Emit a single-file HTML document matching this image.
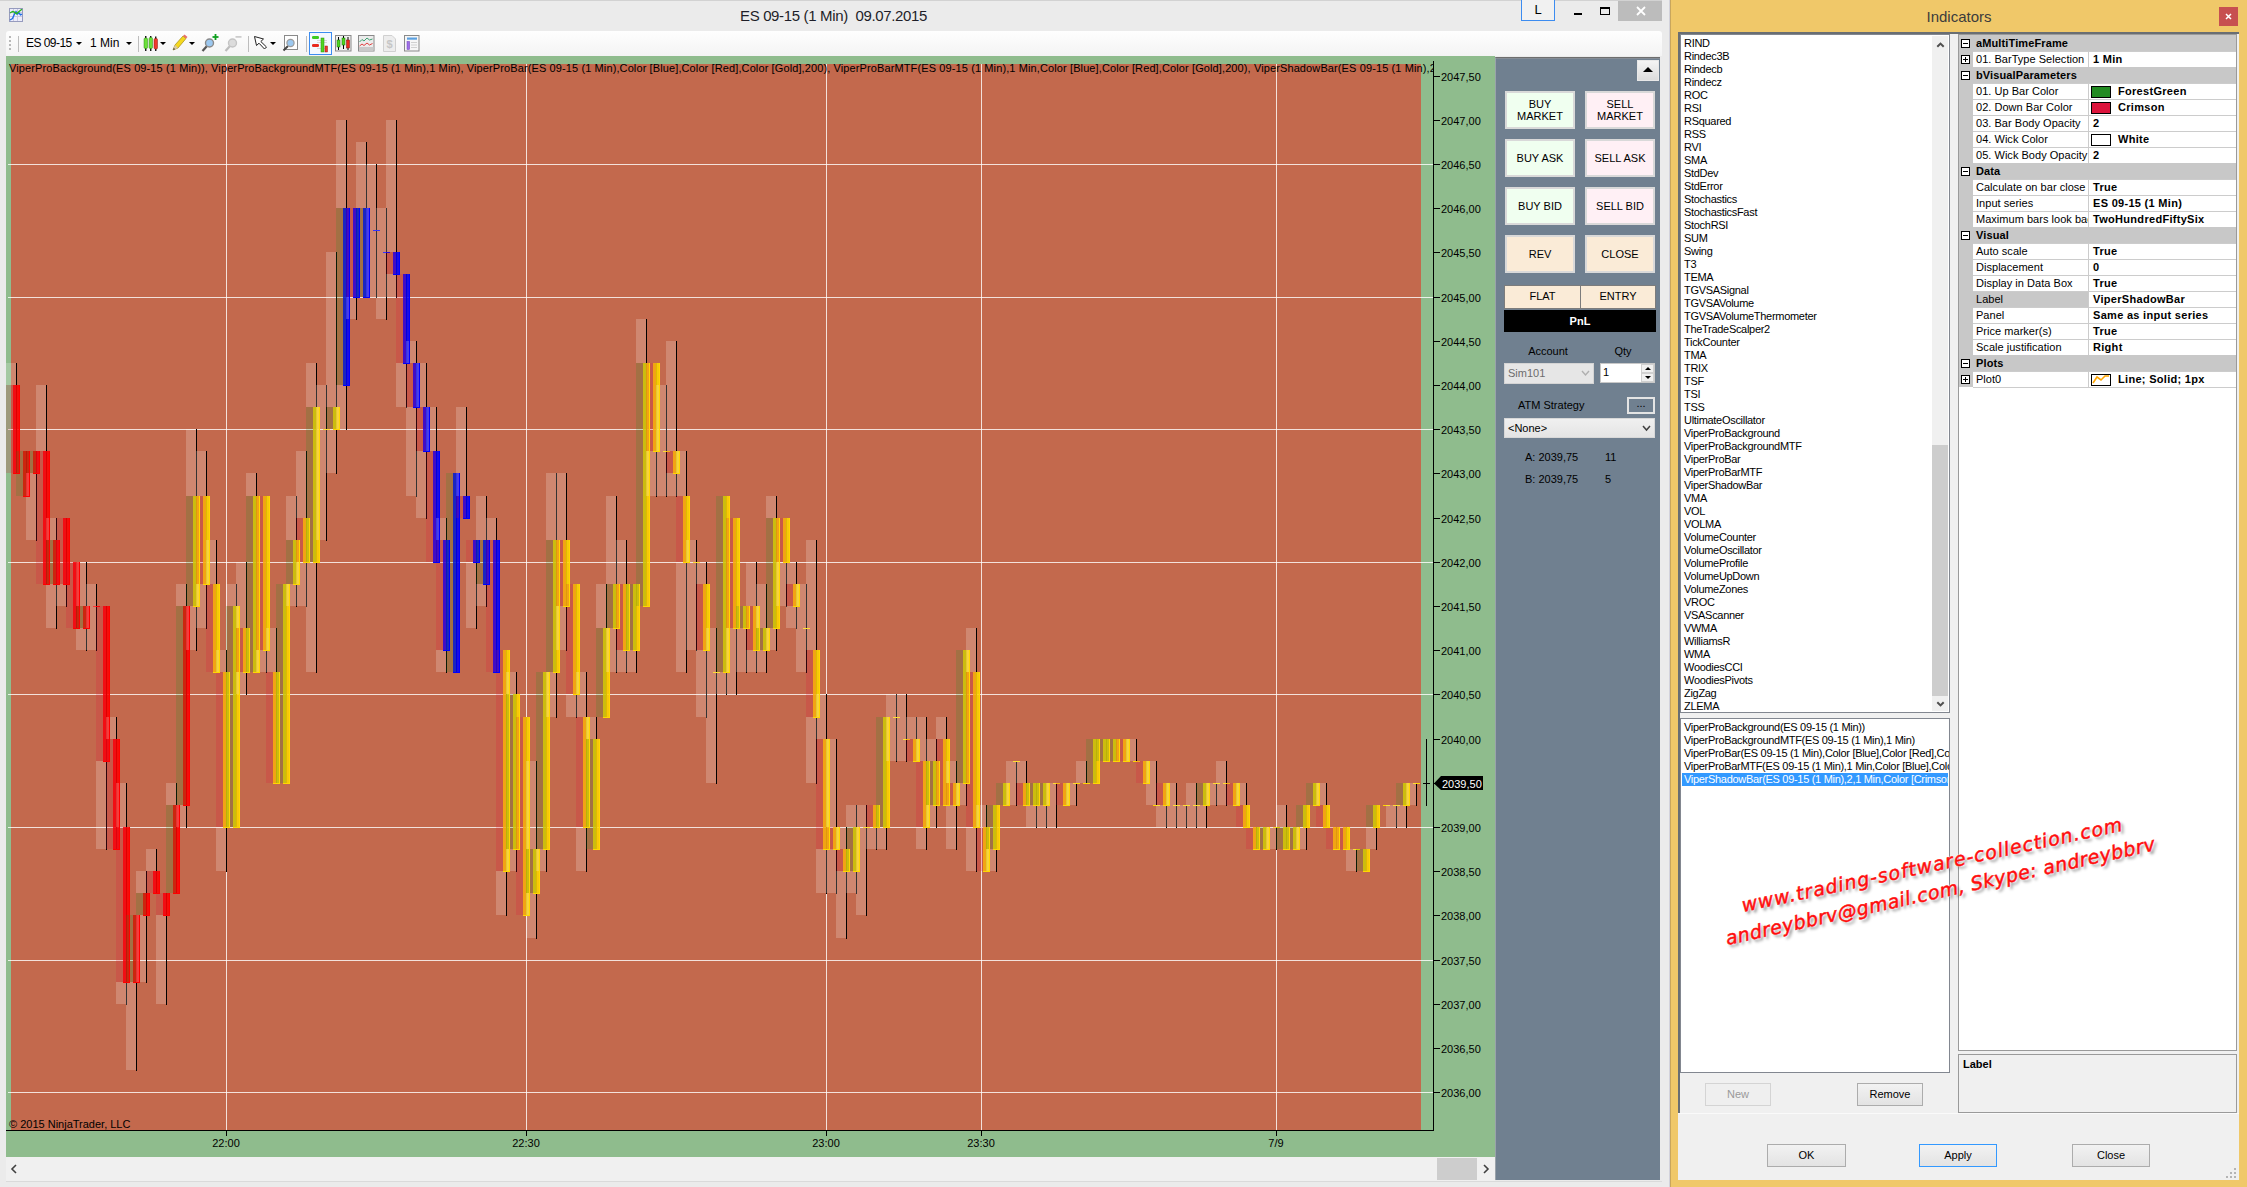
<!DOCTYPE html>
<html><head><meta charset="utf-8"><title>ES 09-15 (1 Min)</title>
<style>
*{box-sizing:border-box;margin:0;padding:0}
html,body{width:2247px;height:1187px;overflow:hidden;background:#EBEBEB}
body{position:relative;font-family:"Liberation Sans",sans-serif;font-size:11px;color:#000}
.a{position:absolute}
.t{position:absolute;white-space:nowrap}
.c{text-align:center}
.tb{position:absolute;left:6px;top:31px;width:1656px;height:25px;background:linear-gradient(#FEFEFE,#F4F4F4);border-radius:3px 3px 0 0}
.sep{position:absolute;top:36px;width:1px;height:16px;background:#BDBDBD}
.dd{position:absolute;width:0;height:0;border-left:3px solid transparent;border-right:3px solid transparent;border-top:3px solid #000}
.bt{position:absolute;width:70px;height:38px;border:2px solid #D9D9D9;font-size:11px;line-height:12px;display:flex;align-items:center;justify-content:center;text-align:center}
.buy{background:#F0FFF0}.sell{background:#FFF0F5}.neu{background:#FAEBD7}
.wl{position:absolute;color:#000;font-size:11px;white-space:nowrap}
.btn{position:absolute;height:23px;border:1px solid #ACACAC;background:linear-gradient(#F2F2F2,#E3E3E3);font-size:11px;line-height:21px;text-align:center}
.lb{position:absolute;background:#fff;border:1px solid #828790;overflow:hidden}
.li{position:absolute;left:3px;height:13px;line-height:13px;white-space:nowrap;font-size:11px;letter-spacing:-0.3px}
.pg{position:absolute;left:1958px;top:34px;width:279px;height:1017px;background:#fff;border:1px solid #9A9A9A;overflow:hidden}
.row{position:absolute;left:0;width:277px;height:16px;line-height:17px;font-size:11px;white-space:nowrap}
.cat{background:#C8C8C8;font-weight:bold}
.gut{position:absolute;left:0;top:0;width:14px;height:16px;background:#C8C8C8}
.lab{position:absolute;left:14px;top:0;width:116px;height:16px;line-height:15px;padding-left:3px;overflow:hidden;border-top:1px solid #CCCCCC;border-right:1px solid #CCCCCC;letter-spacing:0.03px}
.val{position:absolute;left:130px;top:0;width:147px;height:16px;line-height:15px;padding-left:4px;overflow:hidden;border-top:1px solid #CCCCCC;font-weight:bold;letter-spacing:0.3px}
.pm{position:absolute;left:2px;top:4px;width:9px;height:9px;border:1px solid #000;background:#fff}
.pm:before{content:"";position:absolute;left:1px;top:3px;width:5px;height:1px;background:#000}
.pm.plus:after{content:"";position:absolute;left:3px;top:1px;width:1px;height:5px;background:#000}
.sw{position:absolute;left:2px;top:2px;width:20px;height:12px;border:1px solid #000}
.wm{position:absolute;white-space:nowrap;color:#FF0D0D;font-style:italic;font-weight:normal;-webkit-text-stroke:0.5px #FF0D0D;font-family:"DejaVu Sans","Liberation Sans",sans-serif;transform-origin:0 100%;text-shadow:0 0 2px #fff,0 0 2px #fff,2px 3px 3px rgba(0,0,0,.45)}
</style></head><body>
<div class="a" style="left:0;top:0;width:1669px;height:1px;background:#D2D2D2"></div>
<svg class="a" style="left:9px;top:8px" width="14" height="14" viewBox="0 0 14 14"><rect x=".5" y=".5" width="13" height="13" fill="#ECECFA" stroke="#969BBE"/><path d="M4.5 1V13M8.5 1V13M1 4.5H13M1 8.5H13" stroke="#C8C8E1" stroke-width="1" fill="none"/><polyline points="1,12 3.5,10.5 5.5,6 7,3.5 8.5,6 10,5 11.5,6.8 13,6.2" fill="none" stroke="#1E6EE6" stroke-width="1.4"/><polyline points="1,5 3.5,3.5 5.5,4.2 7.5,5.8 10,3.5 13,1.2" fill="none" stroke="#28B41E" stroke-width="1.4"/></svg>
<div class="t" id="wtitle" style="left:740px;top:6px;font-size:15px;line-height:20px;color:#1E1E28;letter-spacing:-0.35px;white-space:pre">ES 09-15 (1 Min)  09.07.2015</div>
<div class="a c" style="left:1521px;top:-1px;width:34px;height:22px;border:1px solid #3C8CF0;background:#F1F1F1;font-size:13px;line-height:20px">L</div>
<div class="a" style="left:1574px;top:13px;width:8px;height:2px;background:#000"></div>
<div class="a" style="left:1600px;top:7px;width:10px;height:8px;border:1px solid #000;border-top-width:2px"></div>
<div class="a" style="left:1618px;top:1px;width:45px;height:20px;background:#BCBCBC"></div>
<svg class="a" style="left:1636px;top:6px" width="10" height="10" viewBox="0 0 10 10"><path d="M1 1L9 9M9 1L1 9" stroke="#fff" stroke-width="1.8"/></svg>
<div class="tb"></div>
<div class="a" style="left:9px;top:36px;width:2px;height:2px;background:#B8B8B8"></div>
<div class="a" style="left:9px;top:40px;width:2px;height:2px;background:#B8B8B8"></div>
<div class="a" style="left:9px;top:44px;width:2px;height:2px;background:#B8B8B8"></div>
<div class="a" style="left:9px;top:48px;width:2px;height:2px;background:#B8B8B8"></div>
<div class="sep" style="left:18px"></div>
<div class="t" style="left:26px;top:35px;font-size:12px;line-height:16px;letter-spacing:-0.55px">ES 09-15</div>
<div class="dd" style="left:76px;top:42px"></div>
<div class="t" style="left:90px;top:35px;font-size:12px;line-height:16px">1 Min</div>
<div class="dd" style="left:126px;top:42px"></div>
<div class="sep" style="left:138px"></div>
<svg class="a" style="left:143px;top:36px" width="16" height="15" viewBox="0 0 16 15"><rect x="2.1" y="0" width="1.3" height="15" fill="#000"/><rect x="7.1" y="0" width="1.3" height="15" fill="#000"/><rect x="12.1" y="0.5" width="1.3" height="14.5" fill="#000"/><rect x="1" y="2" width="3.5" height="10.5" rx="1.2" fill="#6BE03A" stroke="#2A8A10" stroke-width=".5"/><rect x="6" y="1.5" width="3.5" height="11" rx="1.2" fill="#6BE03A" stroke="#2A8A10" stroke-width=".5"/><rect x="11" y="2.5" width="3.5" height="10.5" rx="1.2" fill="#F03A2E" stroke="#8A1A10" stroke-width=".5"/></svg>
<div class="dd" style="left:160px;top:42px"></div>
<svg class="a" style="left:172px;top:34px" width="16" height="18" viewBox="0 0 16 18"><polygon points="1,16 3,11 11,2 14,4.5 6,14" fill="#F5D81E" stroke="#A08A10" stroke-width=".7"/><polygon points="11,2 12.5,0.6 15.5,3 14,4.5" fill="#E8706A"/><polygon points="1,16 3,11 6,14" fill="#D8C8A8"/><polygon points="1,16 1.8,13.8 3.2,15.2" fill="#444"/></svg>
<div class="dd" style="left:189px;top:42px"></div>
<svg class="a" style="left:201px;top:33px" width="18" height="20" viewBox="0 0 18 20"><line x1="1.5" y1="18" x2="6" y2="13" stroke="#555" stroke-width="2.2"/><circle cx="8.5" cy="10" r="4" fill="#9CC8F0" stroke="#8A8A8A" stroke-width="1.4"/><rect x="13.6" y="1" width="1.8" height="6" fill="#10A020"/><rect x="11.5" y="3.1" width="6" height="1.8" fill="#10A020"/></svg>
<svg class="a" style="left:224px;top:33px" width="18" height="20" viewBox="0 0 18 20"><line x1="1.5" y1="18" x2="6" y2="13" stroke="#BDBDBD" stroke-width="2.2"/><circle cx="8.5" cy="10" r="4" fill="#DCDCDC" stroke="#C4C4C4" stroke-width="1.4"/><rect x="11.5" y="3.1" width="6" height="1.6" fill="#C8C8C8"/></svg>
<div class="sep" style="left:248px"></div>
<svg class="a" style="left:253px;top:35px" width="16" height="16" viewBox="0 0 16 16"><polygon points="1.5,1.5 3.5,10.5 6,8.2 11.5,14 13.5,12 7.8,6.5 10.5,4" fill="#fff" stroke="#222" stroke-width="1"/></svg>
<div class="dd" style="left:270px;top:42px"></div>
<svg class="a" style="left:282px;top:34px" width="18" height="18" viewBox="0 0 18 18"><rect x="2.5" y="1.5" width="13" height="14" fill="#fff" stroke="#8A8A8A"/><line x1="1.5" y1="16.5" x2="6" y2="12" stroke="#444" stroke-width="2"/><circle cx="8.5" cy="9" r="3.6" fill="#9CC8F0" stroke="#9A9A9A" stroke-width="1.2"/></svg>
<div class="sep" style="left:306px"></div>
<div class="a" style="left:309px;top:32px;width:23px;height:23px;border:1px solid #3C8CF0;background:#F4F8FE"></div>
<svg class="a" style="left:311px;top:34px" width="19" height="19" viewBox="0 0 19 19"><rect x="1" y="2" width="7" height="3" rx="1.3" fill="#3CCB20"/><rect x="1" y="10" width="7" height="3" rx="1.3" fill="#E8281E"/><rect x="6" y="6" width="10" height="1" fill="#D8D8D8"/><rect x="6" y="8" width="10" height="1" fill="#D8D8D8"/><rect x="6" y="14" width="10" height="1" fill="#D8D8D8"/><rect x="10" y="4" width="3" height="14" fill="#4FD620" stroke="#2A8A10" stroke-width=".5"/><rect x="14" y="12" width="2.5" height="6" fill="#EE3A2E" stroke="#9A1A10" stroke-width=".5"/></svg>
<svg class="a" style="left:335px;top:35px" width="17" height="17" viewBox="0 0 17 17"><rect x=".5" y=".5" width="15.5" height="15.5" fill="#F0F0F0" stroke="#8A8A8A"/><rect x="3" y="2" width="1" height="13" fill="#000"/><rect x="8" y="1" width="1" height="13" fill="#000"/><rect x="12.5" y="2" width="1" height="13" fill="#000"/><rect x="2" y="5" width="3" height="7" fill="#4FD620" stroke="#1A6A08" stroke-width=".5"/><rect x="7" y="3" width="3" height="7" fill="#4FD620" stroke="#1A6A08" stroke-width=".5"/><rect x="11.5" y="5" width="3" height="8" fill="#EE2A1E" stroke="#7A1008" stroke-width=".5"/></svg>
<svg class="a" style="left:358px;top:35px" width="17" height="17" viewBox="0 0 17 17"><rect x=".5" y=".5" width="15.5" height="15.5" fill="#ECECEC" stroke="#8A8A8A"/><rect x="1" y="12" width="14.5" height="4" fill="#C9C9C9"/><polyline points="1.5,7 4,4.5 6,6 9,3 11.5,5 14.5,4" fill="none" stroke="#3CA070" stroke-width="1"/><polyline points="1.5,11 4,9 6,10.5 9,8 11.5,10 14.5,8.5" fill="none" stroke="#E04040" stroke-width="1"/></svg>
<svg class="a" style="left:383px;top:35px" width="13" height="17" viewBox="0 0 13 17"><polygon points=".5,.5 9,.5 12.5,4 12.5,16.5 .5,16.5" fill="#EDEDED" stroke="#D0D0D0"/><text x="6.5" y="13" font-size="11" font-weight="bold" text-anchor="middle" fill="#C6C6C6" font-family="'Liberation Sans',sans-serif">$</text></svg>
<svg class="a" style="left:404px;top:35px" width="16" height="17" viewBox="0 0 16 17"><rect x=".5" y=".5" width="14.5" height="15.5" fill="#F6F6F6" stroke="#8A8A8A"/><rect x="3" y="2.5" width="10" height="2.2" fill="#5AA0E0"/><rect x="3" y="6.5" width="2.6" height="8" fill="#A070E8" stroke="#7040C0" stroke-width=".5"/><rect x="7" y="7" width="6" height="1" fill="#D0D0D0"/><rect x="7" y="9.5" width="6" height="1" fill="#D0D0D0"/><rect x="7" y="12" width="6" height="1" fill="#D0D0D0"/></svg>
<svg id="chart" width="1489" height="1101" viewBox="6 56 1489 1101" shape-rendering="crispEdges" style="position:absolute;left:6px;top:56px">
<rect x="6" y="56" width="1489" height="1101" fill="#8FBC8D"/>
<rect x="11" y="64" width="1410" height="1066" fill="#C3694D"/>
<g fill="#fff" fill-opacity="0.8">
<rect x="226" y="64" width="1" height="1066"/>
<rect x="526" y="64" width="1" height="1066"/>
<rect x="826" y="64" width="1" height="1066"/>
<rect x="981" y="64" width="1" height="1066"/>
<rect x="1276" y="64" width="1" height="1066"/>
<rect x="8" y="164" width="1425" height="1"/>
<rect x="8" y="297" width="1425" height="1"/>
<rect x="8" y="429" width="1425" height="1"/>
<rect x="8" y="562" width="1425" height="1"/>
<rect x="8" y="694" width="1425" height="1"/>
<rect x="8" y="827" width="1425" height="1"/>
<rect x="8" y="960" width="1425" height="1"/>
<rect x="8" y="1092" width="1425" height="1"/>
</g>
<g>
<rect x="16" y="363" width="1" height="111" fill="#000"/>
<rect x="13" y="385" width="7" height="89" fill="#FF0000" fill-opacity="0.87"/>
<rect x="26" y="451" width="1" height="46" fill="#000"/>
<rect x="23" y="451" width="7" height="46" fill="#FF0000" fill-opacity="0.87"/>
<rect x="36" y="451" width="1" height="90" fill="#000"/>
<rect x="33" y="451" width="7" height="23" fill="#FF0000" fill-opacity="0.87"/>
<rect x="46" y="385" width="1" height="200" fill="#000"/>
<rect x="43" y="451" width="7" height="134" fill="#FF0000" fill-opacity="0.87"/>
<rect x="56" y="518" width="1" height="111" fill="#000"/>
<rect x="53" y="540" width="7" height="45" fill="#FF0000" fill-opacity="0.87"/>
<rect x="66" y="518" width="1" height="89" fill="#000"/>
<rect x="63" y="518" width="7" height="67" fill="#FF0000" fill-opacity="0.87"/>
<rect x="76" y="562" width="1" height="67" fill="#000"/>
<rect x="73" y="562" width="7" height="67" fill="#FF0000" fill-opacity="0.87"/>
<rect x="86" y="562" width="1" height="89" fill="#000"/>
<rect x="83" y="606" width="7" height="23" fill="#FF0000" fill-opacity="0.87"/>
<rect x="96" y="584" width="1" height="67" fill="#000"/>
<rect x="93" y="606" width="7" height="1" fill="#FF0000"/>
<rect x="106" y="606" width="1" height="244" fill="#000"/>
<rect x="103" y="606" width="7" height="156" fill="#FF0000" fill-opacity="0.87"/>
<rect x="116" y="717" width="1" height="133" fill="#000"/>
<rect x="113" y="739" width="7" height="111" fill="#FF0000" fill-opacity="0.87"/>
<rect x="126" y="783" width="1" height="222" fill="#000"/>
<rect x="123" y="827" width="7" height="156" fill="#FF0000" fill-opacity="0.87"/>
<rect x="136" y="915" width="1" height="156" fill="#000"/>
<rect x="133" y="915" width="7" height="68" fill="#FF0000" fill-opacity="0.87"/>
<rect x="146" y="871" width="1" height="112" fill="#000"/>
<rect x="143" y="893" width="7" height="23" fill="#FF0000" fill-opacity="0.87"/>
<rect x="156" y="849" width="1" height="45" fill="#000"/>
<rect x="153" y="871" width="7" height="23" fill="#FF0000" fill-opacity="0.87"/>
<rect x="166" y="893" width="1" height="112" fill="#000"/>
<rect x="163" y="893" width="7" height="23" fill="#FF0000" fill-opacity="0.87"/>
<rect x="176" y="783" width="1" height="111" fill="#000"/>
<rect x="173" y="805" width="7" height="89" fill="#FF0000" fill-opacity="0.87"/>
<rect x="186" y="584" width="1" height="244" fill="#000"/>
<rect x="183" y="606" width="7" height="200" fill="#FF0000" fill-opacity="0.87"/>
<rect x="196" y="429" width="1" height="222" fill="#000"/>
<rect x="193" y="496" width="7" height="111" fill="#FFD700" fill-opacity="0.87"/>
<rect x="206" y="451" width="1" height="178" fill="#000"/>
<rect x="203" y="496" width="7" height="89" fill="#FFD700" fill-opacity="0.87"/>
<rect x="216" y="540" width="1" height="133" fill="#000"/>
<rect x="213" y="584" width="7" height="89" fill="#FFD700" fill-opacity="0.87"/>
<rect x="226" y="650" width="1" height="222" fill="#000"/>
<rect x="223" y="672" width="7" height="156" fill="#FFD700" fill-opacity="0.87"/>
<rect x="236" y="584" width="1" height="244" fill="#000"/>
<rect x="233" y="606" width="7" height="222" fill="#FFD700" fill-opacity="0.87"/>
<rect x="246" y="562" width="1" height="133" fill="#000"/>
<rect x="243" y="628" width="7" height="45" fill="#FFD700" fill-opacity="0.87"/>
<rect x="256" y="473" width="1" height="200" fill="#000"/>
<rect x="253" y="496" width="7" height="177" fill="#FFD700" fill-opacity="0.87"/>
<rect x="266" y="496" width="1" height="177" fill="#000"/>
<rect x="263" y="496" width="7" height="155" fill="#FFD700" fill-opacity="0.87"/>
<rect x="276" y="628" width="1" height="156" fill="#000"/>
<rect x="273" y="672" width="7" height="112" fill="#FFD700" fill-opacity="0.87"/>
<rect x="286" y="584" width="1" height="200" fill="#000"/>
<rect x="283" y="584" width="7" height="200" fill="#FFD700" fill-opacity="0.87"/>
<rect x="296" y="496" width="1" height="111" fill="#000"/>
<rect x="293" y="540" width="7" height="45" fill="#FFD700" fill-opacity="0.87"/>
<rect x="306" y="451" width="1" height="156" fill="#000"/>
<rect x="303" y="518" width="7" height="45" fill="#FFD700" fill-opacity="0.87"/>
<rect x="316" y="363" width="1" height="310" fill="#000"/>
<rect x="313" y="407" width="7" height="156" fill="#FFD700" fill-opacity="0.87"/>
<rect x="326" y="385" width="1" height="156" fill="#000"/>
<rect x="323" y="429" width="7" height="1" fill="#FFD700"/>
<rect x="336" y="252" width="1" height="222" fill="#000"/>
<rect x="333" y="407" width="7" height="23" fill="#FFD700" fill-opacity="0.87"/>
<rect x="346" y="120" width="1" height="310" fill="#000"/>
<rect x="343" y="208" width="7" height="178" fill="#0000FF" fill-opacity="0.87"/>
<rect x="356" y="208" width="1" height="112" fill="#000"/>
<rect x="353" y="208" width="7" height="90" fill="#0000FF" fill-opacity="0.87"/>
<rect x="366" y="142" width="1" height="156" fill="#000"/>
<rect x="363" y="208" width="7" height="90" fill="#0000FF" fill-opacity="0.87"/>
<rect x="376" y="164" width="1" height="134" fill="#000"/>
<rect x="373" y="230" width="7" height="1" fill="#0000FF"/>
<rect x="386" y="208" width="1" height="112" fill="#000"/>
<rect x="383" y="252" width="7" height="1" fill="#0000FF"/>
<rect x="396" y="120" width="1" height="178" fill="#000"/>
<rect x="393" y="252" width="7" height="23" fill="#0000FF" fill-opacity="0.87"/>
<rect x="406" y="274" width="1" height="134" fill="#000"/>
<rect x="403" y="274" width="7" height="90" fill="#0000FF" fill-opacity="0.87"/>
<rect x="416" y="341" width="1" height="156" fill="#000"/>
<rect x="413" y="363" width="7" height="45" fill="#0000FF" fill-opacity="0.87"/>
<rect x="426" y="363" width="1" height="156" fill="#000"/>
<rect x="423" y="407" width="7" height="45" fill="#0000FF" fill-opacity="0.87"/>
<rect x="436" y="407" width="1" height="156" fill="#000"/>
<rect x="433" y="451" width="7" height="112" fill="#0000FF" fill-opacity="0.87"/>
<rect x="446" y="518" width="1" height="155" fill="#000"/>
<rect x="443" y="540" width="7" height="111" fill="#0000FF" fill-opacity="0.87"/>
<rect x="456" y="473" width="1" height="200" fill="#000"/>
<rect x="453" y="473" width="7" height="200" fill="#0000FF" fill-opacity="0.87"/>
<rect x="466" y="407" width="1" height="112" fill="#000"/>
<rect x="463" y="496" width="7" height="23" fill="#0000FF" fill-opacity="0.87"/>
<rect x="476" y="540" width="1" height="89" fill="#000"/>
<rect x="473" y="540" width="7" height="23" fill="#0000FF" fill-opacity="0.87"/>
<rect x="486" y="496" width="1" height="111" fill="#000"/>
<rect x="483" y="540" width="7" height="45" fill="#0000FF" fill-opacity="0.87"/>
<rect x="496" y="518" width="1" height="155" fill="#000"/>
<rect x="493" y="540" width="7" height="133" fill="#0000FF" fill-opacity="0.87"/>
<rect x="506" y="650" width="1" height="266" fill="#000"/>
<rect x="503" y="650" width="7" height="222" fill="#FFD700" fill-opacity="0.87"/>
<rect x="516" y="672" width="1" height="200" fill="#000"/>
<rect x="513" y="694" width="7" height="156" fill="#FFD700" fill-opacity="0.87"/>
<rect x="526" y="717" width="1" height="199" fill="#000"/>
<rect x="523" y="717" width="7" height="199" fill="#FFD700" fill-opacity="0.87"/>
<rect x="536" y="761" width="1" height="178" fill="#000"/>
<rect x="533" y="849" width="7" height="45" fill="#FFD700" fill-opacity="0.87"/>
<rect x="546" y="672" width="1" height="200" fill="#000"/>
<rect x="543" y="672" width="7" height="178" fill="#FFD700" fill-opacity="0.87"/>
<rect x="556" y="473" width="1" height="245" fill="#000"/>
<rect x="553" y="540" width="7" height="133" fill="#FFD700" fill-opacity="0.87"/>
<rect x="566" y="473" width="1" height="178" fill="#000"/>
<rect x="563" y="540" width="7" height="67" fill="#FFD700" fill-opacity="0.87"/>
<rect x="576" y="584" width="1" height="134" fill="#000"/>
<rect x="573" y="584" width="7" height="111" fill="#FFD700" fill-opacity="0.87"/>
<rect x="586" y="672" width="1" height="200" fill="#000"/>
<rect x="583" y="717" width="7" height="111" fill="#FFD700" fill-opacity="0.87"/>
<rect x="596" y="717" width="1" height="133" fill="#000"/>
<rect x="593" y="739" width="7" height="111" fill="#FFD700" fill-opacity="0.87"/>
<rect x="606" y="584" width="1" height="134" fill="#000"/>
<rect x="603" y="628" width="7" height="90" fill="#FFD700" fill-opacity="0.87"/>
<rect x="616" y="496" width="1" height="177" fill="#000"/>
<rect x="613" y="584" width="7" height="45" fill="#FFD700" fill-opacity="0.87"/>
<rect x="626" y="540" width="1" height="133" fill="#000"/>
<rect x="623" y="584" width="7" height="67" fill="#FFD700" fill-opacity="0.87"/>
<rect x="636" y="584" width="1" height="89" fill="#000"/>
<rect x="633" y="584" width="7" height="67" fill="#FFD700" fill-opacity="0.87"/>
<rect x="646" y="319" width="1" height="288" fill="#000"/>
<rect x="643" y="363" width="7" height="244" fill="#FFD700" fill-opacity="0.87"/>
<rect x="656" y="363" width="1" height="134" fill="#000"/>
<rect x="653" y="363" width="7" height="89" fill="#FFD700" fill-opacity="0.87"/>
<rect x="666" y="385" width="1" height="112" fill="#000"/>
<rect x="663" y="451" width="7" height="1" fill="#FFD700"/>
<rect x="676" y="341" width="1" height="156" fill="#000"/>
<rect x="673" y="451" width="7" height="23" fill="#FFD700" fill-opacity="0.87"/>
<rect x="686" y="451" width="1" height="222" fill="#000"/>
<rect x="683" y="496" width="7" height="67" fill="#FFD700" fill-opacity="0.87"/>
<rect x="696" y="540" width="1" height="111" fill="#000"/>
<rect x="693" y="562" width="7" height="1" fill="#FFD700"/>
<rect x="706" y="562" width="1" height="156" fill="#000"/>
<rect x="703" y="584" width="7" height="67" fill="#FFD700" fill-opacity="0.87"/>
<rect x="716" y="628" width="1" height="156" fill="#000"/>
<rect x="713" y="672" width="7" height="1" fill="#FFD700"/>
<rect x="726" y="496" width="1" height="199" fill="#000"/>
<rect x="723" y="496" width="7" height="177" fill="#FFD700" fill-opacity="0.87"/>
<rect x="736" y="518" width="1" height="177" fill="#000"/>
<rect x="733" y="518" width="7" height="111" fill="#FFD700" fill-opacity="0.87"/>
<rect x="746" y="606" width="1" height="67" fill="#000"/>
<rect x="743" y="606" width="7" height="23" fill="#FFD700" fill-opacity="0.87"/>
<rect x="756" y="562" width="1" height="111" fill="#000"/>
<rect x="753" y="606" width="7" height="45" fill="#FFD700" fill-opacity="0.87"/>
<rect x="766" y="584" width="1" height="89" fill="#000"/>
<rect x="763" y="628" width="7" height="23" fill="#FFD700" fill-opacity="0.87"/>
<rect x="776" y="496" width="1" height="155" fill="#000"/>
<rect x="773" y="518" width="7" height="111" fill="#FFD700" fill-opacity="0.87"/>
<rect x="786" y="518" width="1" height="89" fill="#000"/>
<rect x="783" y="518" width="7" height="45" fill="#FFD700" fill-opacity="0.87"/>
<rect x="796" y="562" width="1" height="67" fill="#000"/>
<rect x="793" y="584" width="7" height="23" fill="#FFD700" fill-opacity="0.87"/>
<rect x="806" y="584" width="1" height="89" fill="#000"/>
<rect x="803" y="628" width="7" height="1" fill="#FFD700"/>
<rect x="816" y="540" width="1" height="244" fill="#000"/>
<rect x="813" y="650" width="7" height="68" fill="#FFD700" fill-opacity="0.87"/>
<rect x="826" y="694" width="1" height="200" fill="#000"/>
<rect x="823" y="739" width="7" height="111" fill="#FFD700" fill-opacity="0.87"/>
<rect x="836" y="739" width="1" height="155" fill="#000"/>
<rect x="833" y="827" width="7" height="23" fill="#FFD700" fill-opacity="0.87"/>
<rect x="846" y="827" width="1" height="112" fill="#000"/>
<rect x="843" y="849" width="7" height="23" fill="#FFD700" fill-opacity="0.87"/>
<rect x="856" y="805" width="1" height="89" fill="#000"/>
<rect x="853" y="827" width="7" height="45" fill="#FFD700" fill-opacity="0.87"/>
<rect x="866" y="805" width="1" height="111" fill="#000"/>
<rect x="863" y="827" width="7" height="1" fill="#FFD700"/>
<rect x="876" y="805" width="1" height="45" fill="#000"/>
<rect x="873" y="805" width="7" height="23" fill="#FFD700" fill-opacity="0.87"/>
<rect x="886" y="717" width="1" height="133" fill="#000"/>
<rect x="883" y="717" width="7" height="111" fill="#FFD700" fill-opacity="0.87"/>
<rect x="896" y="694" width="1" height="68" fill="#000"/>
<rect x="893" y="717" width="7" height="1" fill="#FFD700"/>
<rect x="906" y="694" width="1" height="68" fill="#000"/>
<rect x="903" y="739" width="7" height="1" fill="#FFD700"/>
<rect x="916" y="717" width="1" height="45" fill="#000"/>
<rect x="913" y="739" width="7" height="23" fill="#FFD700" fill-opacity="0.87"/>
<rect x="926" y="717" width="1" height="133" fill="#000"/>
<rect x="923" y="761" width="7" height="67" fill="#FFD700" fill-opacity="0.87"/>
<rect x="936" y="739" width="1" height="89" fill="#000"/>
<rect x="933" y="761" width="7" height="45" fill="#FFD700" fill-opacity="0.87"/>
<rect x="946" y="717" width="1" height="89" fill="#000"/>
<rect x="943" y="739" width="7" height="67" fill="#FFD700" fill-opacity="0.87"/>
<rect x="956" y="761" width="1" height="89" fill="#000"/>
<rect x="953" y="783" width="7" height="23" fill="#FFD700" fill-opacity="0.87"/>
<rect x="966" y="650" width="1" height="156" fill="#000"/>
<rect x="963" y="650" width="7" height="134" fill="#FFD700" fill-opacity="0.87"/>
<rect x="976" y="628" width="1" height="244" fill="#000"/>
<rect x="973" y="672" width="7" height="156" fill="#FFD700" fill-opacity="0.87"/>
<rect x="986" y="805" width="1" height="67" fill="#000"/>
<rect x="983" y="827" width="7" height="45" fill="#FFD700" fill-opacity="0.87"/>
<rect x="996" y="805" width="1" height="67" fill="#000"/>
<rect x="993" y="805" width="7" height="45" fill="#FFD700" fill-opacity="0.87"/>
<rect x="1006" y="783" width="1" height="23" fill="#000"/>
<rect x="1003" y="783" width="7" height="23" fill="#FFD700" fill-opacity="0.87"/>
<rect x="1016" y="761" width="1" height="45" fill="#000"/>
<rect x="1013" y="761" width="7" height="1" fill="#FFD700"/>
<rect x="1026" y="761" width="1" height="45" fill="#000"/>
<rect x="1023" y="783" width="7" height="23" fill="#FFD700" fill-opacity="0.87"/>
<rect x="1036" y="783" width="1" height="45" fill="#000"/>
<rect x="1033" y="783" width="7" height="23" fill="#FFD700" fill-opacity="0.87"/>
<rect x="1046" y="783" width="1" height="45" fill="#000"/>
<rect x="1043" y="783" width="7" height="23" fill="#FFD700" fill-opacity="0.87"/>
<rect x="1056" y="783" width="1" height="45" fill="#000"/>
<rect x="1053" y="783" width="7" height="1" fill="#FFD700"/>
<rect x="1066" y="783" width="1" height="23" fill="#000"/>
<rect x="1063" y="783" width="7" height="23" fill="#FFD700" fill-opacity="0.87"/>
<rect x="1076" y="783" width="1" height="23" fill="#000"/>
<rect x="1073" y="783" width="7" height="1" fill="#FFD700"/>
<rect x="1086" y="761" width="1" height="23" fill="#000"/>
<rect x="1083" y="783" width="7" height="1" fill="#FFD700"/>
<rect x="1096" y="739" width="1" height="45" fill="#000"/>
<rect x="1093" y="739" width="7" height="45" fill="#FFD700" fill-opacity="0.87"/>
<rect x="1106" y="739" width="1" height="23" fill="#000"/>
<rect x="1103" y="739" width="7" height="23" fill="#FFD700" fill-opacity="0.87"/>
<rect x="1116" y="739" width="1" height="23" fill="#000"/>
<rect x="1113" y="739" width="7" height="23" fill="#FFD700" fill-opacity="0.87"/>
<rect x="1126" y="739" width="1" height="23" fill="#000"/>
<rect x="1123" y="739" width="7" height="23" fill="#FFD700" fill-opacity="0.87"/>
<rect x="1136" y="739" width="1" height="23" fill="#000"/>
<rect x="1133" y="761" width="7" height="1" fill="#FFD700"/>
<rect x="1146" y="761" width="1" height="23" fill="#000"/>
<rect x="1143" y="761" width="7" height="23" fill="#FFD700" fill-opacity="0.87"/>
<rect x="1156" y="761" width="1" height="45" fill="#000"/>
<rect x="1153" y="805" width="7" height="1" fill="#FFD700"/>
<rect x="1166" y="783" width="1" height="45" fill="#000"/>
<rect x="1163" y="783" width="7" height="23" fill="#FFD700" fill-opacity="0.87"/>
<rect x="1176" y="783" width="1" height="45" fill="#000"/>
<rect x="1173" y="805" width="7" height="1" fill="#FFD700"/>
<rect x="1186" y="805" width="1" height="23" fill="#000"/>
<rect x="1183" y="805" width="7" height="1" fill="#FFD700"/>
<rect x="1196" y="783" width="1" height="45" fill="#000"/>
<rect x="1193" y="805" width="7" height="1" fill="#FFD700"/>
<rect x="1206" y="783" width="1" height="45" fill="#000"/>
<rect x="1203" y="783" width="7" height="23" fill="#FFD700" fill-opacity="0.87"/>
<rect x="1216" y="783" width="1" height="23" fill="#000"/>
<rect x="1213" y="783" width="7" height="1" fill="#FFD700"/>
<rect x="1226" y="761" width="1" height="45" fill="#000"/>
<rect x="1223" y="783" width="7" height="1" fill="#FFD700"/>
<rect x="1236" y="783" width="1" height="23" fill="#000"/>
<rect x="1233" y="783" width="7" height="23" fill="#FFD700" fill-opacity="0.87"/>
<rect x="1246" y="783" width="1" height="45" fill="#000"/>
<rect x="1243" y="805" width="7" height="23" fill="#FFD700" fill-opacity="0.87"/>
<rect x="1256" y="827" width="1" height="23" fill="#000"/>
<rect x="1253" y="827" width="7" height="23" fill="#FFD700" fill-opacity="0.87"/>
<rect x="1266" y="827" width="1" height="23" fill="#000"/>
<rect x="1263" y="827" width="7" height="23" fill="#FFD700" fill-opacity="0.87"/>
<rect x="1276" y="827" width="1" height="23" fill="#000"/>
<rect x="1273" y="827" width="7" height="1" fill="#FFD700"/>
<rect x="1286" y="805" width="1" height="45" fill="#000"/>
<rect x="1283" y="827" width="7" height="23" fill="#FFD700" fill-opacity="0.87"/>
<rect x="1296" y="827" width="1" height="23" fill="#000"/>
<rect x="1293" y="827" width="7" height="23" fill="#FFD700" fill-opacity="0.87"/>
<rect x="1306" y="805" width="1" height="45" fill="#000"/>
<rect x="1303" y="805" width="7" height="23" fill="#FFD700" fill-opacity="0.87"/>
<rect x="1316" y="783" width="1" height="23" fill="#000"/>
<rect x="1313" y="783" width="7" height="23" fill="#FFD700" fill-opacity="0.87"/>
<rect x="1326" y="783" width="1" height="45" fill="#000"/>
<rect x="1323" y="805" width="7" height="23" fill="#FFD700" fill-opacity="0.87"/>
<rect x="1336" y="827" width="1" height="23" fill="#000"/>
<rect x="1333" y="827" width="7" height="23" fill="#FFD700" fill-opacity="0.87"/>
<rect x="1346" y="827" width="1" height="23" fill="#000"/>
<rect x="1343" y="827" width="7" height="23" fill="#FFD700" fill-opacity="0.87"/>
<rect x="1356" y="849" width="1" height="23" fill="#000"/>
<rect x="1353" y="849" width="7" height="1" fill="#FFD700"/>
<rect x="1366" y="849" width="1" height="23" fill="#000"/>
<rect x="1363" y="849" width="7" height="23" fill="#FFD700" fill-opacity="0.87"/>
<rect x="1376" y="805" width="1" height="45" fill="#000"/>
<rect x="1373" y="805" width="7" height="23" fill="#FFD700" fill-opacity="0.87"/>
<rect x="1386" y="805" width="1" height="1" fill="#000"/>
<rect x="1383" y="805" width="7" height="1" fill="#FFD700"/>
<rect x="1396" y="805" width="1" height="23" fill="#000"/>
<rect x="1393" y="805" width="7" height="1" fill="#FFD700"/>
<rect x="1406" y="783" width="1" height="45" fill="#000"/>
<rect x="1403" y="783" width="7" height="23" fill="#FFD700" fill-opacity="0.87"/>
<rect x="1416" y="783" width="1" height="23" fill="#000"/>
<rect x="1413" y="783" width="7" height="1" fill="#FFD700"/>
</g>
<g>
<rect x="6" y="363" width="10" height="22" fill="#fff" fill-opacity="0.2"/>
<rect x="6" y="385" width="10" height="88" fill="#DC143C" fill-opacity="0.2"/>
<rect x="16" y="451" width="10" height="45" fill="#228B22" fill-opacity="0.2"/>
<rect x="26" y="451" width="10" height="22" fill="#228B22" fill-opacity="0.2"/>
<rect x="26" y="473" width="10" height="67" fill="#fff" fill-opacity="0.2"/>
<rect x="36" y="385" width="10" height="66" fill="#fff" fill-opacity="0.2"/>
<rect x="36" y="451" width="10" height="133" fill="#DC143C" fill-opacity="0.2"/>
<rect x="46" y="518" width="10" height="22" fill="#fff" fill-opacity="0.2"/>
<rect x="46" y="540" width="10" height="44" fill="#228B22" fill-opacity="0.2"/>
<rect x="46" y="584" width="10" height="44" fill="#fff" fill-opacity="0.2"/>
<rect x="56" y="518" width="10" height="66" fill="#DC143C" fill-opacity="0.2"/>
<rect x="56" y="584" width="10" height="22" fill="#fff" fill-opacity="0.2"/>
<rect x="66" y="562" width="10" height="66" fill="#DC143C" fill-opacity="0.2"/>
<rect x="76" y="562" width="10" height="44" fill="#fff" fill-opacity="0.2"/>
<rect x="76" y="606" width="10" height="22" fill="#228B22" fill-opacity="0.2"/>
<rect x="76" y="628" width="10" height="22" fill="#fff" fill-opacity="0.2"/>
<rect x="86" y="584" width="10" height="22" fill="#fff" fill-opacity="0.2"/>
<rect x="86" y="606" width="10" height="44" fill="#fff" fill-opacity="0.2"/>
<rect x="96" y="606" width="10" height="155" fill="#DC143C" fill-opacity="0.2"/>
<rect x="96" y="761" width="10" height="88" fill="#fff" fill-opacity="0.2"/>
<rect x="106" y="717" width="10" height="22" fill="#fff" fill-opacity="0.2"/>
<rect x="106" y="739" width="10" height="110" fill="#DC143C" fill-opacity="0.2"/>
<rect x="116" y="783" width="10" height="44" fill="#fff" fill-opacity="0.2"/>
<rect x="116" y="827" width="10" height="155" fill="#DC143C" fill-opacity="0.2"/>
<rect x="116" y="982" width="10" height="22" fill="#fff" fill-opacity="0.2"/>
<rect x="126" y="915" width="10" height="67" fill="#228B22" fill-opacity="0.2"/>
<rect x="126" y="982" width="10" height="88" fill="#fff" fill-opacity="0.2"/>
<rect x="136" y="871" width="10" height="22" fill="#fff" fill-opacity="0.2"/>
<rect x="136" y="893" width="10" height="22" fill="#228B22" fill-opacity="0.2"/>
<rect x="136" y="915" width="10" height="67" fill="#fff" fill-opacity="0.2"/>
<rect x="146" y="849" width="10" height="22" fill="#fff" fill-opacity="0.2"/>
<rect x="146" y="871" width="10" height="22" fill="#DC143C" fill-opacity="0.2"/>
<rect x="156" y="893" width="10" height="22" fill="#DC143C" fill-opacity="0.2"/>
<rect x="156" y="915" width="10" height="89" fill="#fff" fill-opacity="0.2"/>
<rect x="166" y="783" width="10" height="22" fill="#fff" fill-opacity="0.2"/>
<rect x="166" y="805" width="10" height="88" fill="#228B22" fill-opacity="0.2"/>
<rect x="176" y="584" width="10" height="22" fill="#fff" fill-opacity="0.2"/>
<rect x="176" y="606" width="10" height="199" fill="#228B22" fill-opacity="0.2"/>
<rect x="176" y="805" width="10" height="22" fill="#fff" fill-opacity="0.2"/>
<rect x="186" y="429" width="10" height="67" fill="#fff" fill-opacity="0.2"/>
<rect x="186" y="496" width="10" height="110" fill="#228B22" fill-opacity="0.2"/>
<rect x="186" y="606" width="10" height="44" fill="#fff" fill-opacity="0.2"/>
<rect x="196" y="451" width="10" height="45" fill="#fff" fill-opacity="0.2"/>
<rect x="196" y="496" width="10" height="88" fill="#DC143C" fill-opacity="0.2"/>
<rect x="196" y="584" width="10" height="44" fill="#fff" fill-opacity="0.2"/>
<rect x="206" y="540" width="10" height="44" fill="#fff" fill-opacity="0.2"/>
<rect x="206" y="584" width="10" height="88" fill="#DC143C" fill-opacity="0.2"/>
<rect x="216" y="650" width="10" height="22" fill="#fff" fill-opacity="0.2"/>
<rect x="216" y="672" width="10" height="155" fill="#DC143C" fill-opacity="0.2"/>
<rect x="216" y="827" width="10" height="44" fill="#fff" fill-opacity="0.2"/>
<rect x="226" y="584" width="10" height="22" fill="#fff" fill-opacity="0.2"/>
<rect x="226" y="606" width="10" height="221" fill="#228B22" fill-opacity="0.2"/>
<rect x="236" y="562" width="10" height="66" fill="#fff" fill-opacity="0.2"/>
<rect x="236" y="628" width="10" height="44" fill="#DC143C" fill-opacity="0.2"/>
<rect x="236" y="672" width="10" height="22" fill="#fff" fill-opacity="0.2"/>
<rect x="246" y="473" width="10" height="23" fill="#fff" fill-opacity="0.2"/>
<rect x="246" y="496" width="10" height="176" fill="#228B22" fill-opacity="0.2"/>
<rect x="256" y="496" width="10" height="154" fill="#DC143C" fill-opacity="0.2"/>
<rect x="256" y="650" width="10" height="22" fill="#fff" fill-opacity="0.2"/>
<rect x="266" y="628" width="10" height="44" fill="#fff" fill-opacity="0.2"/>
<rect x="266" y="672" width="10" height="111" fill="#DC143C" fill-opacity="0.2"/>
<rect x="276" y="584" width="10" height="199" fill="#228B22" fill-opacity="0.2"/>
<rect x="286" y="496" width="10" height="44" fill="#fff" fill-opacity="0.2"/>
<rect x="286" y="540" width="10" height="44" fill="#228B22" fill-opacity="0.2"/>
<rect x="286" y="584" width="10" height="22" fill="#fff" fill-opacity="0.2"/>
<rect x="296" y="451" width="10" height="67" fill="#fff" fill-opacity="0.2"/>
<rect x="296" y="518" width="10" height="44" fill="#DC143C" fill-opacity="0.2"/>
<rect x="296" y="562" width="10" height="44" fill="#fff" fill-opacity="0.2"/>
<rect x="306" y="363" width="10" height="44" fill="#fff" fill-opacity="0.2"/>
<rect x="306" y="407" width="10" height="155" fill="#228B22" fill-opacity="0.2"/>
<rect x="306" y="562" width="10" height="110" fill="#fff" fill-opacity="0.2"/>
<rect x="316" y="385" width="10" height="44" fill="#fff" fill-opacity="0.2"/>
<rect x="316" y="429" width="10" height="111" fill="#fff" fill-opacity="0.2"/>
<rect x="326" y="252" width="10" height="155" fill="#fff" fill-opacity="0.2"/>
<rect x="326" y="407" width="10" height="22" fill="#228B22" fill-opacity="0.2"/>
<rect x="326" y="429" width="10" height="44" fill="#fff" fill-opacity="0.2"/>
<rect x="336" y="120" width="10" height="88" fill="#fff" fill-opacity="0.2"/>
<rect x="336" y="208" width="10" height="177" fill="#228B22" fill-opacity="0.2"/>
<rect x="336" y="385" width="10" height="44" fill="#fff" fill-opacity="0.2"/>
<rect x="346" y="208" width="10" height="89" fill="#DC143C" fill-opacity="0.2"/>
<rect x="346" y="297" width="10" height="22" fill="#fff" fill-opacity="0.2"/>
<rect x="356" y="142" width="10" height="66" fill="#fff" fill-opacity="0.2"/>
<rect x="356" y="208" width="10" height="89" fill="#228B22" fill-opacity="0.2"/>
<rect x="366" y="164" width="10" height="66" fill="#fff" fill-opacity="0.2"/>
<rect x="366" y="230" width="10" height="67" fill="#fff" fill-opacity="0.2"/>
<rect x="376" y="208" width="10" height="44" fill="#fff" fill-opacity="0.2"/>
<rect x="376" y="252" width="10" height="67" fill="#fff" fill-opacity="0.2"/>
<rect x="386" y="120" width="10" height="132" fill="#fff" fill-opacity="0.2"/>
<rect x="386" y="252" width="10" height="22" fill="#DC143C" fill-opacity="0.2"/>
<rect x="386" y="274" width="10" height="23" fill="#fff" fill-opacity="0.2"/>
<rect x="396" y="274" width="10" height="89" fill="#DC143C" fill-opacity="0.2"/>
<rect x="396" y="363" width="10" height="44" fill="#fff" fill-opacity="0.2"/>
<rect x="406" y="341" width="10" height="22" fill="#fff" fill-opacity="0.2"/>
<rect x="406" y="363" width="10" height="44" fill="#DC143C" fill-opacity="0.2"/>
<rect x="406" y="407" width="10" height="89" fill="#fff" fill-opacity="0.2"/>
<rect x="416" y="363" width="10" height="44" fill="#fff" fill-opacity="0.2"/>
<rect x="416" y="407" width="10" height="44" fill="#DC143C" fill-opacity="0.2"/>
<rect x="416" y="451" width="10" height="67" fill="#fff" fill-opacity="0.2"/>
<rect x="426" y="407" width="10" height="44" fill="#fff" fill-opacity="0.2"/>
<rect x="426" y="451" width="10" height="111" fill="#DC143C" fill-opacity="0.2"/>
<rect x="436" y="518" width="10" height="22" fill="#fff" fill-opacity="0.2"/>
<rect x="436" y="540" width="10" height="110" fill="#DC143C" fill-opacity="0.2"/>
<rect x="436" y="650" width="10" height="22" fill="#fff" fill-opacity="0.2"/>
<rect x="446" y="473" width="10" height="199" fill="#228B22" fill-opacity="0.2"/>
<rect x="456" y="407" width="10" height="89" fill="#fff" fill-opacity="0.2"/>
<rect x="456" y="496" width="10" height="22" fill="#DC143C" fill-opacity="0.2"/>
<rect x="466" y="540" width="10" height="22" fill="#DC143C" fill-opacity="0.2"/>
<rect x="466" y="562" width="10" height="66" fill="#fff" fill-opacity="0.2"/>
<rect x="476" y="496" width="10" height="44" fill="#fff" fill-opacity="0.2"/>
<rect x="476" y="540" width="10" height="44" fill="#228B22" fill-opacity="0.2"/>
<rect x="476" y="584" width="10" height="22" fill="#fff" fill-opacity="0.2"/>
<rect x="486" y="518" width="10" height="22" fill="#fff" fill-opacity="0.2"/>
<rect x="486" y="540" width="10" height="132" fill="#DC143C" fill-opacity="0.2"/>
<rect x="496" y="650" width="10" height="221" fill="#DC143C" fill-opacity="0.2"/>
<rect x="496" y="871" width="10" height="44" fill="#fff" fill-opacity="0.2"/>
<rect x="506" y="672" width="10" height="22" fill="#fff" fill-opacity="0.2"/>
<rect x="506" y="694" width="10" height="155" fill="#228B22" fill-opacity="0.2"/>
<rect x="506" y="849" width="10" height="22" fill="#fff" fill-opacity="0.2"/>
<rect x="516" y="717" width="10" height="198" fill="#DC143C" fill-opacity="0.2"/>
<rect x="526" y="761" width="10" height="88" fill="#fff" fill-opacity="0.2"/>
<rect x="526" y="849" width="10" height="44" fill="#228B22" fill-opacity="0.2"/>
<rect x="526" y="893" width="10" height="45" fill="#fff" fill-opacity="0.2"/>
<rect x="536" y="672" width="10" height="177" fill="#228B22" fill-opacity="0.2"/>
<rect x="536" y="849" width="10" height="22" fill="#fff" fill-opacity="0.2"/>
<rect x="546" y="473" width="10" height="67" fill="#fff" fill-opacity="0.2"/>
<rect x="546" y="540" width="10" height="132" fill="#228B22" fill-opacity="0.2"/>
<rect x="546" y="672" width="10" height="45" fill="#fff" fill-opacity="0.2"/>
<rect x="556" y="473" width="10" height="67" fill="#fff" fill-opacity="0.2"/>
<rect x="556" y="540" width="10" height="66" fill="#DC143C" fill-opacity="0.2"/>
<rect x="556" y="606" width="10" height="44" fill="#fff" fill-opacity="0.2"/>
<rect x="566" y="584" width="10" height="110" fill="#DC143C" fill-opacity="0.2"/>
<rect x="566" y="694" width="10" height="23" fill="#fff" fill-opacity="0.2"/>
<rect x="576" y="672" width="10" height="45" fill="#fff" fill-opacity="0.2"/>
<rect x="576" y="717" width="10" height="110" fill="#DC143C" fill-opacity="0.2"/>
<rect x="576" y="827" width="10" height="44" fill="#fff" fill-opacity="0.2"/>
<rect x="586" y="717" width="10" height="22" fill="#fff" fill-opacity="0.2"/>
<rect x="586" y="739" width="10" height="110" fill="#228B22" fill-opacity="0.2"/>
<rect x="596" y="584" width="10" height="44" fill="#fff" fill-opacity="0.2"/>
<rect x="596" y="628" width="10" height="89" fill="#228B22" fill-opacity="0.2"/>
<rect x="606" y="496" width="10" height="88" fill="#fff" fill-opacity="0.2"/>
<rect x="606" y="584" width="10" height="44" fill="#228B22" fill-opacity="0.2"/>
<rect x="606" y="628" width="10" height="44" fill="#fff" fill-opacity="0.2"/>
<rect x="616" y="540" width="10" height="44" fill="#fff" fill-opacity="0.2"/>
<rect x="616" y="584" width="10" height="66" fill="#DC143C" fill-opacity="0.2"/>
<rect x="616" y="650" width="10" height="22" fill="#fff" fill-opacity="0.2"/>
<rect x="626" y="584" width="10" height="66" fill="#228B22" fill-opacity="0.2"/>
<rect x="626" y="650" width="10" height="22" fill="#fff" fill-opacity="0.2"/>
<rect x="636" y="319" width="10" height="44" fill="#fff" fill-opacity="0.2"/>
<rect x="636" y="363" width="10" height="243" fill="#228B22" fill-opacity="0.2"/>
<rect x="646" y="363" width="10" height="88" fill="#DC143C" fill-opacity="0.2"/>
<rect x="646" y="451" width="10" height="45" fill="#fff" fill-opacity="0.2"/>
<rect x="656" y="385" width="10" height="66" fill="#fff" fill-opacity="0.2"/>
<rect x="656" y="451" width="10" height="45" fill="#fff" fill-opacity="0.2"/>
<rect x="666" y="341" width="10" height="110" fill="#fff" fill-opacity="0.2"/>
<rect x="666" y="451" width="10" height="22" fill="#DC143C" fill-opacity="0.2"/>
<rect x="666" y="473" width="10" height="23" fill="#fff" fill-opacity="0.2"/>
<rect x="676" y="451" width="10" height="45" fill="#fff" fill-opacity="0.2"/>
<rect x="676" y="496" width="10" height="66" fill="#DC143C" fill-opacity="0.2"/>
<rect x="676" y="562" width="10" height="110" fill="#fff" fill-opacity="0.2"/>
<rect x="686" y="540" width="10" height="22" fill="#fff" fill-opacity="0.2"/>
<rect x="686" y="562" width="10" height="88" fill="#fff" fill-opacity="0.2"/>
<rect x="696" y="562" width="10" height="22" fill="#fff" fill-opacity="0.2"/>
<rect x="696" y="584" width="10" height="66" fill="#DC143C" fill-opacity="0.2"/>
<rect x="696" y="650" width="10" height="67" fill="#fff" fill-opacity="0.2"/>
<rect x="706" y="628" width="10" height="44" fill="#fff" fill-opacity="0.2"/>
<rect x="706" y="672" width="10" height="111" fill="#fff" fill-opacity="0.2"/>
<rect x="716" y="496" width="10" height="176" fill="#228B22" fill-opacity="0.2"/>
<rect x="716" y="672" width="10" height="22" fill="#fff" fill-opacity="0.2"/>
<rect x="726" y="518" width="10" height="110" fill="#DC143C" fill-opacity="0.2"/>
<rect x="726" y="628" width="10" height="66" fill="#fff" fill-opacity="0.2"/>
<rect x="736" y="606" width="10" height="22" fill="#228B22" fill-opacity="0.2"/>
<rect x="736" y="628" width="10" height="44" fill="#fff" fill-opacity="0.2"/>
<rect x="746" y="562" width="10" height="44" fill="#fff" fill-opacity="0.2"/>
<rect x="746" y="606" width="10" height="44" fill="#DC143C" fill-opacity="0.2"/>
<rect x="746" y="650" width="10" height="22" fill="#fff" fill-opacity="0.2"/>
<rect x="756" y="584" width="10" height="44" fill="#fff" fill-opacity="0.2"/>
<rect x="756" y="628" width="10" height="22" fill="#228B22" fill-opacity="0.2"/>
<rect x="756" y="650" width="10" height="22" fill="#fff" fill-opacity="0.2"/>
<rect x="766" y="496" width="10" height="22" fill="#fff" fill-opacity="0.2"/>
<rect x="766" y="518" width="10" height="110" fill="#228B22" fill-opacity="0.2"/>
<rect x="766" y="628" width="10" height="22" fill="#fff" fill-opacity="0.2"/>
<rect x="776" y="518" width="10" height="44" fill="#DC143C" fill-opacity="0.2"/>
<rect x="776" y="562" width="10" height="44" fill="#fff" fill-opacity="0.2"/>
<rect x="786" y="562" width="10" height="22" fill="#fff" fill-opacity="0.2"/>
<rect x="786" y="584" width="10" height="22" fill="#DC143C" fill-opacity="0.2"/>
<rect x="786" y="606" width="10" height="22" fill="#fff" fill-opacity="0.2"/>
<rect x="796" y="584" width="10" height="44" fill="#fff" fill-opacity="0.2"/>
<rect x="796" y="628" width="10" height="44" fill="#fff" fill-opacity="0.2"/>
<rect x="806" y="540" width="10" height="110" fill="#fff" fill-opacity="0.2"/>
<rect x="806" y="650" width="10" height="67" fill="#DC143C" fill-opacity="0.2"/>
<rect x="806" y="717" width="10" height="66" fill="#fff" fill-opacity="0.2"/>
<rect x="816" y="694" width="10" height="45" fill="#fff" fill-opacity="0.2"/>
<rect x="816" y="739" width="10" height="110" fill="#DC143C" fill-opacity="0.2"/>
<rect x="816" y="849" width="10" height="44" fill="#fff" fill-opacity="0.2"/>
<rect x="826" y="739" width="10" height="88" fill="#fff" fill-opacity="0.2"/>
<rect x="826" y="827" width="10" height="22" fill="#DC143C" fill-opacity="0.2"/>
<rect x="826" y="849" width="10" height="44" fill="#fff" fill-opacity="0.2"/>
<rect x="836" y="827" width="10" height="22" fill="#fff" fill-opacity="0.2"/>
<rect x="836" y="849" width="10" height="22" fill="#DC143C" fill-opacity="0.2"/>
<rect x="836" y="871" width="10" height="67" fill="#fff" fill-opacity="0.2"/>
<rect x="846" y="805" width="10" height="22" fill="#fff" fill-opacity="0.2"/>
<rect x="846" y="827" width="10" height="44" fill="#228B22" fill-opacity="0.2"/>
<rect x="846" y="871" width="10" height="22" fill="#fff" fill-opacity="0.2"/>
<rect x="856" y="805" width="10" height="22" fill="#fff" fill-opacity="0.2"/>
<rect x="856" y="827" width="10" height="88" fill="#fff" fill-opacity="0.2"/>
<rect x="866" y="805" width="10" height="22" fill="#DC143C" fill-opacity="0.2"/>
<rect x="866" y="827" width="10" height="22" fill="#fff" fill-opacity="0.2"/>
<rect x="876" y="717" width="10" height="110" fill="#228B22" fill-opacity="0.2"/>
<rect x="876" y="827" width="10" height="22" fill="#fff" fill-opacity="0.2"/>
<rect x="886" y="694" width="10" height="23" fill="#fff" fill-opacity="0.2"/>
<rect x="886" y="717" width="10" height="44" fill="#fff" fill-opacity="0.2"/>
<rect x="896" y="694" width="10" height="45" fill="#fff" fill-opacity="0.2"/>
<rect x="896" y="739" width="10" height="22" fill="#fff" fill-opacity="0.2"/>
<rect x="906" y="717" width="10" height="22" fill="#fff" fill-opacity="0.2"/>
<rect x="906" y="739" width="10" height="22" fill="#DC143C" fill-opacity="0.2"/>
<rect x="916" y="717" width="10" height="44" fill="#fff" fill-opacity="0.2"/>
<rect x="916" y="761" width="10" height="66" fill="#DC143C" fill-opacity="0.2"/>
<rect x="916" y="827" width="10" height="22" fill="#fff" fill-opacity="0.2"/>
<rect x="926" y="739" width="10" height="22" fill="#fff" fill-opacity="0.2"/>
<rect x="926" y="761" width="10" height="44" fill="#228B22" fill-opacity="0.2"/>
<rect x="926" y="805" width="10" height="22" fill="#fff" fill-opacity="0.2"/>
<rect x="936" y="717" width="10" height="22" fill="#fff" fill-opacity="0.2"/>
<rect x="936" y="739" width="10" height="66" fill="#DC143C" fill-opacity="0.2"/>
<rect x="946" y="761" width="10" height="22" fill="#fff" fill-opacity="0.2"/>
<rect x="946" y="783" width="10" height="22" fill="#DC143C" fill-opacity="0.2"/>
<rect x="946" y="805" width="10" height="44" fill="#fff" fill-opacity="0.2"/>
<rect x="956" y="650" width="10" height="133" fill="#228B22" fill-opacity="0.2"/>
<rect x="956" y="783" width="10" height="22" fill="#fff" fill-opacity="0.2"/>
<rect x="966" y="628" width="10" height="44" fill="#fff" fill-opacity="0.2"/>
<rect x="966" y="672" width="10" height="155" fill="#DC143C" fill-opacity="0.2"/>
<rect x="966" y="827" width="10" height="44" fill="#fff" fill-opacity="0.2"/>
<rect x="976" y="805" width="10" height="22" fill="#fff" fill-opacity="0.2"/>
<rect x="976" y="827" width="10" height="44" fill="#DC143C" fill-opacity="0.2"/>
<rect x="986" y="805" width="10" height="44" fill="#228B22" fill-opacity="0.2"/>
<rect x="986" y="849" width="10" height="22" fill="#fff" fill-opacity="0.2"/>
<rect x="996" y="783" width="10" height="22" fill="#228B22" fill-opacity="0.2"/>
<rect x="1006" y="761" width="10" height="44" fill="#fff" fill-opacity="0.2"/>
<rect x="1016" y="761" width="10" height="22" fill="#fff" fill-opacity="0.2"/>
<rect x="1016" y="783" width="10" height="22" fill="#DC143C" fill-opacity="0.2"/>
<rect x="1026" y="783" width="10" height="22" fill="#228B22" fill-opacity="0.2"/>
<rect x="1026" y="805" width="10" height="22" fill="#fff" fill-opacity="0.2"/>
<rect x="1036" y="783" width="10" height="22" fill="#228B22" fill-opacity="0.2"/>
<rect x="1036" y="805" width="10" height="22" fill="#fff" fill-opacity="0.2"/>
<rect x="1046" y="783" width="10" height="44" fill="#fff" fill-opacity="0.2"/>
<rect x="1056" y="783" width="10" height="22" fill="#DC143C" fill-opacity="0.2"/>
<rect x="1066" y="783" width="10" height="22" fill="#fff" fill-opacity="0.2"/>
<rect x="1076" y="761" width="10" height="22" fill="#fff" fill-opacity="0.2"/>
<rect x="1086" y="739" width="10" height="44" fill="#228B22" fill-opacity="0.2"/>
<rect x="1096" y="739" width="10" height="22" fill="#228B22" fill-opacity="0.2"/>
<rect x="1106" y="739" width="10" height="22" fill="#228B22" fill-opacity="0.2"/>
<rect x="1116" y="739" width="10" height="22" fill="#DC143C" fill-opacity="0.2"/>
<rect x="1126" y="739" width="10" height="22" fill="#fff" fill-opacity="0.2"/>
<rect x="1136" y="761" width="10" height="22" fill="#DC143C" fill-opacity="0.2"/>
<rect x="1146" y="761" width="10" height="44" fill="#fff" fill-opacity="0.2"/>
<rect x="1156" y="783" width="10" height="22" fill="#DC143C" fill-opacity="0.2"/>
<rect x="1156" y="805" width="10" height="22" fill="#fff" fill-opacity="0.2"/>
<rect x="1166" y="783" width="10" height="22" fill="#fff" fill-opacity="0.2"/>
<rect x="1166" y="805" width="10" height="22" fill="#fff" fill-opacity="0.2"/>
<rect x="1176" y="805" width="10" height="22" fill="#fff" fill-opacity="0.2"/>
<rect x="1186" y="783" width="10" height="22" fill="#fff" fill-opacity="0.2"/>
<rect x="1186" y="805" width="10" height="22" fill="#fff" fill-opacity="0.2"/>
<rect x="1196" y="783" width="10" height="22" fill="#228B22" fill-opacity="0.2"/>
<rect x="1196" y="805" width="10" height="22" fill="#fff" fill-opacity="0.2"/>
<rect x="1206" y="783" width="10" height="22" fill="#fff" fill-opacity="0.2"/>
<rect x="1216" y="761" width="10" height="22" fill="#fff" fill-opacity="0.2"/>
<rect x="1216" y="783" width="10" height="22" fill="#fff" fill-opacity="0.2"/>
<rect x="1226" y="783" width="10" height="22" fill="#DC143C" fill-opacity="0.2"/>
<rect x="1236" y="783" width="10" height="22" fill="#fff" fill-opacity="0.2"/>
<rect x="1236" y="805" width="10" height="22" fill="#DC143C" fill-opacity="0.2"/>
<rect x="1246" y="827" width="10" height="22" fill="#DC143C" fill-opacity="0.2"/>
<rect x="1256" y="827" width="10" height="22" fill="#228B22" fill-opacity="0.2"/>
<rect x="1266" y="827" width="10" height="22" fill="#fff" fill-opacity="0.2"/>
<rect x="1276" y="805" width="10" height="22" fill="#fff" fill-opacity="0.2"/>
<rect x="1276" y="827" width="10" height="22" fill="#228B22" fill-opacity="0.2"/>
<rect x="1286" y="827" width="10" height="22" fill="#228B22" fill-opacity="0.2"/>
<rect x="1296" y="805" width="10" height="22" fill="#228B22" fill-opacity="0.2"/>
<rect x="1296" y="827" width="10" height="22" fill="#fff" fill-opacity="0.2"/>
<rect x="1306" y="783" width="10" height="22" fill="#228B22" fill-opacity="0.2"/>
<rect x="1316" y="783" width="10" height="22" fill="#fff" fill-opacity="0.2"/>
<rect x="1316" y="805" width="10" height="22" fill="#DC143C" fill-opacity="0.2"/>
<rect x="1326" y="827" width="10" height="22" fill="#DC143C" fill-opacity="0.2"/>
<rect x="1336" y="827" width="10" height="22" fill="#DC143C" fill-opacity="0.2"/>
<rect x="1346" y="849" width="10" height="22" fill="#fff" fill-opacity="0.2"/>
<rect x="1356" y="849" width="10" height="22" fill="#228B22" fill-opacity="0.2"/>
<rect x="1366" y="805" width="10" height="22" fill="#228B22" fill-opacity="0.2"/>
<rect x="1366" y="827" width="10" height="22" fill="#fff" fill-opacity="0.2"/>
<rect x="1386" y="805" width="10" height="22" fill="#fff" fill-opacity="0.2"/>
<rect x="1396" y="783" width="10" height="22" fill="#228B22" fill-opacity="0.2"/>
<rect x="1396" y="805" width="10" height="22" fill="#fff" fill-opacity="0.2"/>
<rect x="1406" y="783" width="10" height="22" fill="#fff" fill-opacity="0.2"/>
</g>
<g>
<rect x="19" y="385" width="1" height="89" fill="#FF0000"/>
<rect x="13" y="473" width="7" height="1" fill="#FF0000"/>
<rect x="29" y="451" width="1" height="46" fill="#FF0000"/>
<rect x="23" y="496" width="7" height="1" fill="#FF0000"/>
<rect x="39" y="451" width="1" height="23" fill="#FF0000"/>
<rect x="33" y="473" width="7" height="1" fill="#FF0000"/>
<rect x="49" y="451" width="1" height="134" fill="#FF0000"/>
<rect x="43" y="584" width="7" height="1" fill="#FF0000"/>
<rect x="59" y="540" width="1" height="45" fill="#FF0000"/>
<rect x="53" y="584" width="7" height="1" fill="#FF0000"/>
<rect x="69" y="518" width="1" height="67" fill="#FF0000"/>
<rect x="63" y="584" width="7" height="1" fill="#FF0000"/>
<rect x="79" y="562" width="1" height="67" fill="#FF0000"/>
<rect x="73" y="628" width="7" height="1" fill="#FF0000"/>
<rect x="89" y="606" width="1" height="23" fill="#FF0000"/>
<rect x="83" y="628" width="7" height="1" fill="#FF0000"/>
<rect x="109" y="606" width="1" height="156" fill="#FF0000"/>
<rect x="103" y="761" width="7" height="1" fill="#FF0000"/>
<rect x="119" y="739" width="1" height="111" fill="#FF0000"/>
<rect x="113" y="849" width="7" height="1" fill="#FF0000"/>
<rect x="129" y="827" width="1" height="156" fill="#FF0000"/>
<rect x="123" y="982" width="7" height="1" fill="#FF0000"/>
<rect x="139" y="915" width="1" height="68" fill="#FF0000"/>
<rect x="133" y="982" width="7" height="1" fill="#FF0000"/>
<rect x="149" y="893" width="1" height="23" fill="#FF0000"/>
<rect x="143" y="915" width="7" height="1" fill="#FF0000"/>
<rect x="159" y="871" width="1" height="23" fill="#FF0000"/>
<rect x="153" y="893" width="7" height="1" fill="#FF0000"/>
<rect x="169" y="893" width="1" height="23" fill="#FF0000"/>
<rect x="163" y="915" width="7" height="1" fill="#FF0000"/>
<rect x="179" y="805" width="1" height="89" fill="#FF0000"/>
<rect x="173" y="893" width="7" height="1" fill="#FF0000"/>
<rect x="189" y="606" width="1" height="200" fill="#FF0000"/>
<rect x="183" y="805" width="7" height="1" fill="#FF0000"/>
<rect x="199" y="496" width="1" height="111" fill="#FFD700"/>
<rect x="193" y="606" width="7" height="1" fill="#FFD700"/>
<rect x="209" y="496" width="1" height="89" fill="#FFD700"/>
<rect x="203" y="584" width="7" height="1" fill="#FFD700"/>
<rect x="219" y="584" width="1" height="89" fill="#FFD700"/>
<rect x="213" y="672" width="7" height="1" fill="#FFD700"/>
<rect x="229" y="672" width="1" height="156" fill="#FFD700"/>
<rect x="223" y="827" width="7" height="1" fill="#FFD700"/>
<rect x="239" y="606" width="1" height="222" fill="#FFD700"/>
<rect x="233" y="827" width="7" height="1" fill="#FFD700"/>
<rect x="249" y="628" width="1" height="45" fill="#FFD700"/>
<rect x="243" y="672" width="7" height="1" fill="#FFD700"/>
<rect x="259" y="496" width="1" height="177" fill="#FFD700"/>
<rect x="253" y="672" width="7" height="1" fill="#FFD700"/>
<rect x="269" y="496" width="1" height="155" fill="#FFD700"/>
<rect x="263" y="650" width="7" height="1" fill="#FFD700"/>
<rect x="279" y="672" width="1" height="112" fill="#FFD700"/>
<rect x="273" y="783" width="7" height="1" fill="#FFD700"/>
<rect x="289" y="584" width="1" height="200" fill="#FFD700"/>
<rect x="283" y="783" width="7" height="1" fill="#FFD700"/>
<rect x="299" y="540" width="1" height="45" fill="#FFD700"/>
<rect x="293" y="584" width="7" height="1" fill="#FFD700"/>
<rect x="309" y="518" width="1" height="45" fill="#FFD700"/>
<rect x="303" y="562" width="7" height="1" fill="#FFD700"/>
<rect x="319" y="407" width="1" height="156" fill="#FFD700"/>
<rect x="313" y="562" width="7" height="1" fill="#FFD700"/>
<rect x="339" y="407" width="1" height="23" fill="#FFD700"/>
<rect x="333" y="429" width="7" height="1" fill="#FFD700"/>
<rect x="349" y="208" width="1" height="178" fill="#0000FF"/>
<rect x="343" y="385" width="7" height="1" fill="#0000FF"/>
<rect x="359" y="208" width="1" height="90" fill="#0000FF"/>
<rect x="353" y="297" width="7" height="1" fill="#0000FF"/>
<rect x="369" y="208" width="1" height="90" fill="#0000FF"/>
<rect x="363" y="297" width="7" height="1" fill="#0000FF"/>
<rect x="399" y="252" width="1" height="23" fill="#0000FF"/>
<rect x="393" y="274" width="7" height="1" fill="#0000FF"/>
<rect x="409" y="274" width="1" height="90" fill="#0000FF"/>
<rect x="403" y="363" width="7" height="1" fill="#0000FF"/>
<rect x="419" y="363" width="1" height="45" fill="#0000FF"/>
<rect x="413" y="407" width="7" height="1" fill="#0000FF"/>
<rect x="429" y="407" width="1" height="45" fill="#0000FF"/>
<rect x="423" y="451" width="7" height="1" fill="#0000FF"/>
<rect x="439" y="451" width="1" height="112" fill="#0000FF"/>
<rect x="433" y="562" width="7" height="1" fill="#0000FF"/>
<rect x="449" y="540" width="1" height="111" fill="#0000FF"/>
<rect x="443" y="650" width="7" height="1" fill="#0000FF"/>
<rect x="459" y="473" width="1" height="200" fill="#0000FF"/>
<rect x="453" y="672" width="7" height="1" fill="#0000FF"/>
<rect x="469" y="496" width="1" height="23" fill="#0000FF"/>
<rect x="463" y="518" width="7" height="1" fill="#0000FF"/>
<rect x="479" y="540" width="1" height="23" fill="#0000FF"/>
<rect x="473" y="562" width="7" height="1" fill="#0000FF"/>
<rect x="489" y="540" width="1" height="45" fill="#0000FF"/>
<rect x="483" y="584" width="7" height="1" fill="#0000FF"/>
<rect x="499" y="540" width="1" height="133" fill="#0000FF"/>
<rect x="493" y="672" width="7" height="1" fill="#0000FF"/>
<rect x="509" y="650" width="1" height="222" fill="#FFD700"/>
<rect x="503" y="871" width="7" height="1" fill="#FFD700"/>
<rect x="519" y="694" width="1" height="156" fill="#FFD700"/>
<rect x="513" y="849" width="7" height="1" fill="#FFD700"/>
<rect x="529" y="717" width="1" height="199" fill="#FFD700"/>
<rect x="523" y="915" width="7" height="1" fill="#FFD700"/>
<rect x="539" y="849" width="1" height="45" fill="#FFD700"/>
<rect x="533" y="893" width="7" height="1" fill="#FFD700"/>
<rect x="549" y="672" width="1" height="178" fill="#FFD700"/>
<rect x="543" y="849" width="7" height="1" fill="#FFD700"/>
<rect x="559" y="540" width="1" height="133" fill="#FFD700"/>
<rect x="553" y="672" width="7" height="1" fill="#FFD700"/>
<rect x="569" y="540" width="1" height="67" fill="#FFD700"/>
<rect x="563" y="606" width="7" height="1" fill="#FFD700"/>
<rect x="579" y="584" width="1" height="111" fill="#FFD700"/>
<rect x="573" y="694" width="7" height="1" fill="#FFD700"/>
<rect x="589" y="717" width="1" height="111" fill="#FFD700"/>
<rect x="583" y="827" width="7" height="1" fill="#FFD700"/>
<rect x="599" y="739" width="1" height="111" fill="#FFD700"/>
<rect x="593" y="849" width="7" height="1" fill="#FFD700"/>
<rect x="609" y="628" width="1" height="90" fill="#FFD700"/>
<rect x="603" y="717" width="7" height="1" fill="#FFD700"/>
<rect x="619" y="584" width="1" height="45" fill="#FFD700"/>
<rect x="613" y="628" width="7" height="1" fill="#FFD700"/>
<rect x="629" y="584" width="1" height="67" fill="#FFD700"/>
<rect x="623" y="650" width="7" height="1" fill="#FFD700"/>
<rect x="639" y="584" width="1" height="67" fill="#FFD700"/>
<rect x="633" y="650" width="7" height="1" fill="#FFD700"/>
<rect x="649" y="363" width="1" height="244" fill="#FFD700"/>
<rect x="643" y="606" width="7" height="1" fill="#FFD700"/>
<rect x="659" y="363" width="1" height="89" fill="#FFD700"/>
<rect x="653" y="451" width="7" height="1" fill="#FFD700"/>
<rect x="679" y="451" width="1" height="23" fill="#FFD700"/>
<rect x="673" y="473" width="7" height="1" fill="#FFD700"/>
<rect x="689" y="496" width="1" height="67" fill="#FFD700"/>
<rect x="683" y="562" width="7" height="1" fill="#FFD700"/>
<rect x="709" y="584" width="1" height="67" fill="#FFD700"/>
<rect x="703" y="650" width="7" height="1" fill="#FFD700"/>
<rect x="729" y="496" width="1" height="177" fill="#FFD700"/>
<rect x="723" y="672" width="7" height="1" fill="#FFD700"/>
<rect x="739" y="518" width="1" height="111" fill="#FFD700"/>
<rect x="733" y="628" width="7" height="1" fill="#FFD700"/>
<rect x="749" y="606" width="1" height="23" fill="#FFD700"/>
<rect x="743" y="628" width="7" height="1" fill="#FFD700"/>
<rect x="759" y="606" width="1" height="45" fill="#FFD700"/>
<rect x="753" y="650" width="7" height="1" fill="#FFD700"/>
<rect x="769" y="628" width="1" height="23" fill="#FFD700"/>
<rect x="763" y="650" width="7" height="1" fill="#FFD700"/>
<rect x="779" y="518" width="1" height="111" fill="#FFD700"/>
<rect x="773" y="628" width="7" height="1" fill="#FFD700"/>
<rect x="789" y="518" width="1" height="45" fill="#FFD700"/>
<rect x="783" y="562" width="7" height="1" fill="#FFD700"/>
<rect x="799" y="584" width="1" height="23" fill="#FFD700"/>
<rect x="793" y="606" width="7" height="1" fill="#FFD700"/>
<rect x="819" y="650" width="1" height="68" fill="#FFD700"/>
<rect x="813" y="717" width="7" height="1" fill="#FFD700"/>
<rect x="829" y="739" width="1" height="111" fill="#FFD700"/>
<rect x="823" y="849" width="7" height="1" fill="#FFD700"/>
<rect x="839" y="827" width="1" height="23" fill="#FFD700"/>
<rect x="833" y="849" width="7" height="1" fill="#FFD700"/>
<rect x="849" y="849" width="1" height="23" fill="#FFD700"/>
<rect x="843" y="871" width="7" height="1" fill="#FFD700"/>
<rect x="859" y="827" width="1" height="45" fill="#FFD700"/>
<rect x="853" y="871" width="7" height="1" fill="#FFD700"/>
<rect x="879" y="805" width="1" height="23" fill="#FFD700"/>
<rect x="873" y="827" width="7" height="1" fill="#FFD700"/>
<rect x="889" y="717" width="1" height="111" fill="#FFD700"/>
<rect x="883" y="827" width="7" height="1" fill="#FFD700"/>
<rect x="919" y="739" width="1" height="23" fill="#FFD700"/>
<rect x="913" y="761" width="7" height="1" fill="#FFD700"/>
<rect x="929" y="761" width="1" height="67" fill="#FFD700"/>
<rect x="923" y="827" width="7" height="1" fill="#FFD700"/>
<rect x="939" y="761" width="1" height="45" fill="#FFD700"/>
<rect x="933" y="805" width="7" height="1" fill="#FFD700"/>
<rect x="949" y="739" width="1" height="67" fill="#FFD700"/>
<rect x="943" y="805" width="7" height="1" fill="#FFD700"/>
<rect x="959" y="783" width="1" height="23" fill="#FFD700"/>
<rect x="953" y="805" width="7" height="1" fill="#FFD700"/>
<rect x="969" y="650" width="1" height="134" fill="#FFD700"/>
<rect x="963" y="783" width="7" height="1" fill="#FFD700"/>
<rect x="979" y="672" width="1" height="156" fill="#FFD700"/>
<rect x="973" y="827" width="7" height="1" fill="#FFD700"/>
<rect x="989" y="827" width="1" height="45" fill="#FFD700"/>
<rect x="983" y="871" width="7" height="1" fill="#FFD700"/>
<rect x="999" y="805" width="1" height="45" fill="#FFD700"/>
<rect x="993" y="849" width="7" height="1" fill="#FFD700"/>
<rect x="1009" y="783" width="1" height="23" fill="#FFD700"/>
<rect x="1003" y="805" width="7" height="1" fill="#FFD700"/>
<rect x="1029" y="783" width="1" height="23" fill="#FFD700"/>
<rect x="1023" y="805" width="7" height="1" fill="#FFD700"/>
<rect x="1039" y="783" width="1" height="23" fill="#FFD700"/>
<rect x="1033" y="805" width="7" height="1" fill="#FFD700"/>
<rect x="1049" y="783" width="1" height="23" fill="#FFD700"/>
<rect x="1043" y="805" width="7" height="1" fill="#FFD700"/>
<rect x="1069" y="783" width="1" height="23" fill="#FFD700"/>
<rect x="1063" y="805" width="7" height="1" fill="#FFD700"/>
<rect x="1099" y="739" width="1" height="45" fill="#FFD700"/>
<rect x="1093" y="783" width="7" height="1" fill="#FFD700"/>
<rect x="1109" y="739" width="1" height="23" fill="#FFD700"/>
<rect x="1103" y="761" width="7" height="1" fill="#FFD700"/>
<rect x="1119" y="739" width="1" height="23" fill="#FFD700"/>
<rect x="1113" y="761" width="7" height="1" fill="#FFD700"/>
<rect x="1129" y="739" width="1" height="23" fill="#FFD700"/>
<rect x="1123" y="761" width="7" height="1" fill="#FFD700"/>
<rect x="1149" y="761" width="1" height="23" fill="#FFD700"/>
<rect x="1143" y="783" width="7" height="1" fill="#FFD700"/>
<rect x="1169" y="783" width="1" height="23" fill="#FFD700"/>
<rect x="1163" y="805" width="7" height="1" fill="#FFD700"/>
<rect x="1209" y="783" width="1" height="23" fill="#FFD700"/>
<rect x="1203" y="805" width="7" height="1" fill="#FFD700"/>
<rect x="1239" y="783" width="1" height="23" fill="#FFD700"/>
<rect x="1233" y="805" width="7" height="1" fill="#FFD700"/>
<rect x="1249" y="805" width="1" height="23" fill="#FFD700"/>
<rect x="1243" y="827" width="7" height="1" fill="#FFD700"/>
<rect x="1259" y="827" width="1" height="23" fill="#FFD700"/>
<rect x="1253" y="849" width="7" height="1" fill="#FFD700"/>
<rect x="1269" y="827" width="1" height="23" fill="#FFD700"/>
<rect x="1263" y="849" width="7" height="1" fill="#FFD700"/>
<rect x="1289" y="827" width="1" height="23" fill="#FFD700"/>
<rect x="1283" y="849" width="7" height="1" fill="#FFD700"/>
<rect x="1299" y="827" width="1" height="23" fill="#FFD700"/>
<rect x="1293" y="849" width="7" height="1" fill="#FFD700"/>
<rect x="1309" y="805" width="1" height="23" fill="#FFD700"/>
<rect x="1303" y="827" width="7" height="1" fill="#FFD700"/>
<rect x="1319" y="783" width="1" height="23" fill="#FFD700"/>
<rect x="1313" y="805" width="7" height="1" fill="#FFD700"/>
<rect x="1329" y="805" width="1" height="23" fill="#FFD700"/>
<rect x="1323" y="827" width="7" height="1" fill="#FFD700"/>
<rect x="1339" y="827" width="1" height="23" fill="#FFD700"/>
<rect x="1333" y="849" width="7" height="1" fill="#FFD700"/>
<rect x="1349" y="827" width="1" height="23" fill="#FFD700"/>
<rect x="1343" y="849" width="7" height="1" fill="#FFD700"/>
<rect x="1369" y="849" width="1" height="23" fill="#FFD700"/>
<rect x="1363" y="871" width="7" height="1" fill="#FFD700"/>
<rect x="1379" y="805" width="1" height="23" fill="#FFD700"/>
<rect x="1373" y="827" width="7" height="1" fill="#FFD700"/>
<rect x="1409" y="783" width="1" height="23" fill="#FFD700"/>
<rect x="1403" y="805" width="7" height="1" fill="#FFD700"/>
</g>
<rect x="1426" y="739" width="1" height="67" fill="#000"/>
<rect x="1423" y="783" width="7" height="1" fill="#000"/>
<rect x="1433" y="61" width="1" height="1070" fill="#000"/>
<rect x="6" y="1130" width="1428" height="1" fill="#000"/>
<g font-family="'Liberation Sans', sans-serif" font-size="11" fill="#000" shape-rendering="auto">
<rect x="1433" y="76" width="7" height="1" shape-rendering="crispEdges"/>
<text x="1441" y="80.7">2047,50</text>
<rect x="1433" y="120" width="7" height="1" shape-rendering="crispEdges"/>
<text x="1441" y="124.7">2047,00</text>
<rect x="1433" y="164" width="7" height="1" shape-rendering="crispEdges"/>
<text x="1441" y="168.7">2046,50</text>
<rect x="1433" y="208" width="7" height="1" shape-rendering="crispEdges"/>
<text x="1441" y="212.7">2046,00</text>
<rect x="1433" y="252" width="7" height="1" shape-rendering="crispEdges"/>
<text x="1441" y="256.7">2045,50</text>
<rect x="1433" y="297" width="7" height="1" shape-rendering="crispEdges"/>
<text x="1441" y="301.7">2045,00</text>
<rect x="1433" y="341" width="7" height="1" shape-rendering="crispEdges"/>
<text x="1441" y="345.7">2044,50</text>
<rect x="1433" y="385" width="7" height="1" shape-rendering="crispEdges"/>
<text x="1441" y="389.7">2044,00</text>
<rect x="1433" y="429" width="7" height="1" shape-rendering="crispEdges"/>
<text x="1441" y="433.7">2043,50</text>
<rect x="1433" y="473" width="7" height="1" shape-rendering="crispEdges"/>
<text x="1441" y="477.7">2043,00</text>
<rect x="1433" y="518" width="7" height="1" shape-rendering="crispEdges"/>
<text x="1441" y="522.7">2042,50</text>
<rect x="1433" y="562" width="7" height="1" shape-rendering="crispEdges"/>
<text x="1441" y="566.7">2042,00</text>
<rect x="1433" y="606" width="7" height="1" shape-rendering="crispEdges"/>
<text x="1441" y="610.7">2041,50</text>
<rect x="1433" y="650" width="7" height="1" shape-rendering="crispEdges"/>
<text x="1441" y="654.7">2041,00</text>
<rect x="1433" y="694" width="7" height="1" shape-rendering="crispEdges"/>
<text x="1441" y="698.7">2040,50</text>
<rect x="1433" y="739" width="7" height="1" shape-rendering="crispEdges"/>
<text x="1441" y="743.7">2040,00</text>
<rect x="1433" y="783" width="7" height="1" shape-rendering="crispEdges"/>
<text x="1441" y="787.7">2039,50</text>
<rect x="1433" y="827" width="7" height="1" shape-rendering="crispEdges"/>
<text x="1441" y="831.7">2039,00</text>
<rect x="1433" y="871" width="7" height="1" shape-rendering="crispEdges"/>
<text x="1441" y="875.7">2038,50</text>
<rect x="1433" y="915" width="7" height="1" shape-rendering="crispEdges"/>
<text x="1441" y="919.7">2038,00</text>
<rect x="1433" y="960" width="7" height="1" shape-rendering="crispEdges"/>
<text x="1441" y="964.7">2037,50</text>
<rect x="1433" y="1004" width="7" height="1" shape-rendering="crispEdges"/>
<text x="1441" y="1008.7">2037,00</text>
<rect x="1433" y="1048" width="7" height="1" shape-rendering="crispEdges"/>
<text x="1441" y="1052.7">2036,50</text>
<rect x="1433" y="1092" width="7" height="1" shape-rendering="crispEdges"/>
<text x="1441" y="1096.7">2036,00</text>
<rect x="226" y="1130" width="1" height="6" shape-rendering="crispEdges"/>
<text x="226" y="1147" text-anchor="middle">22:00</text>
<rect x="526" y="1130" width="1" height="6" shape-rendering="crispEdges"/>
<text x="526" y="1147" text-anchor="middle">22:30</text>
<rect x="826" y="1130" width="1" height="6" shape-rendering="crispEdges"/>
<text x="826" y="1147" text-anchor="middle">23:00</text>
<rect x="981" y="1130" width="1" height="6" shape-rendering="crispEdges"/>
<text x="981" y="1147" text-anchor="middle">23:30</text>
<rect x="1276" y="1130" width="1" height="6" shape-rendering="crispEdges"/>
<text x="1276" y="1147" text-anchor="middle">7/9</text>
<polygon points="1434,783.5 1441,776 1483,776 1483,790 1441,790" fill="#000" shape-rendering="auto"/>
<text x="1442" y="787.5" fill="#fff">2039,50</text>
<text x="9" y="1128">© 2015 NinjaTrader, LLC</text>
<svg x="6" y="56" width="1427" height="20" viewBox="6 56 1427 20" overflow="hidden"><text id="ctitle" x="9" y="72" textLength="1430" lengthAdjust="spacing">ViperProBackground(ES 09-15 (1 Min)), ViperProBackgroundMTF(ES 09-15 (1 Min),1 Min), ViperProBar(ES 09-15 (1 Min),Color [Blue],Color [Red],Color [Gold],200), ViperProBarMTF(ES 09-15 (1 Min),1 Min,Color [Blue],Color [Red],Color [Gold],200), ViperShadowBar(ES 09-15 (1 Min),2,</text></svg>
</g>
</svg>
<div class="a" style="left:6px;top:1157px;width:1489px;height:24px;background:#F0F0F0"></div>
<div class="a" style="left:1437px;top:1158px;width:40px;height:22px;background:#CDCDCD"></div>
<svg class="a" style="left:10px;top:1164px" width="8" height="10" viewBox="0 0 8 10"><path d="M6 1L2 5L6 9" fill="none" stroke="#404040" stroke-width="1.6"/></svg>
<svg class="a" style="left:1482px;top:1164px" width="8" height="10" viewBox="0 0 8 10"><path d="M2 1L6 5L2 9" fill="none" stroke="#404040" stroke-width="1.6"/></svg>
<div class="a" style="left:6px;top:1181px;width:1656px;height:1px;background:#DADADA"></div>
<div class="a" style="left:1495px;top:57px;width:165px;height:1123px;background:#708090;border-left:1px solid #9AA2AA;border-top:1px solid #6E6E6E;box-shadow:inset 0 1px 0 #858C95"></div>
<div class="a" style="left:1637px;top:60px;width:22px;height:21px;background:linear-gradient(#F4F4F4,#DCDCDC);border:1px solid #E8E8E8"></div>
<div class="a" style="left:1643px;top:67px;width:0;height:0;border-left:5px solid transparent;border-right:5px solid transparent;border-bottom:5px solid #000"></div>
<div class="bt buy" style="left:1505px;top:91px">BUY<br>MARKET</div>
<div class="bt sell" style="left:1585px;top:91px">SELL<br>MARKET</div>
<div class="bt buy" style="left:1505px;top:139px">BUY ASK</div>
<div class="bt sell" style="left:1585px;top:139px">SELL ASK</div>
<div class="bt buy" style="left:1505px;top:187px">BUY BID</div>
<div class="bt sell" style="left:1585px;top:187px">SELL BID</div>
<div class="bt neu" style="left:1505px;top:235px">REV</div>
<div class="bt neu" style="left:1585px;top:235px">CLOSE</div>
<div class="a c" style="left:1504px;top:285px;width:77px;height:24px;background:#FAEBD7;border:1px solid #7C7C7C;line-height:21px">FLAT</div>
<div class="a c" style="left:1580px;top:285px;width:76px;height:24px;background:#FAEBD7;border:1px solid #7C7C7C;line-height:21px">ENTRY</div>
<div class="a c" style="left:1504px;top:310px;width:152px;height:22px;background:#000;color:#fff;font-weight:bold;line-height:22px">PnL</div>
<div class="t c" style="left:1508px;top:344px;width:80px;line-height:14px">Account</div>
<div class="t c" style="left:1603px;top:344px;width:40px;line-height:14px">Qty</div>
<div class="a" style="left:1504px;top:363px;width:90px;height:21px;background:#E6E6E6;border:1px solid #D4D4D4;color:#6D6D6D;line-height:19px;padding-left:3px">Sim101</div>
<svg class="a" style="left:1581px;top:370px" width="9" height="7" viewBox="0 0 9 7"><path d="M1 1L4.5 5L8 1" fill="none" stroke="#B0B0B0" stroke-width="1.4"/></svg>
<div class="a" style="left:1600px;top:363px;width:55px;height:20px;background:#fff;border:1px solid #C8C8C8;line-height:17px;padding-left:2px">1</div>
<div class="a" style="left:1641px;top:364px;width:13px;height:9px;background:#F0F0F0;border:1px solid #D0D0D0"></div>
<div class="a" style="left:1641px;top:373px;width:13px;height:9px;background:#F0F0F0;border:1px solid #D0D0D0"></div>
<div class="a" style="left:1645px;top:367px;width:0;height:0;border-left:3px solid transparent;border-right:3px solid transparent;border-bottom:3px solid #000"></div>
<div class="a" style="left:1645px;top:376px;width:0;height:0;border-left:3px solid transparent;border-right:3px solid transparent;border-top:3px solid #000"></div>
<div class="t" style="left:1518px;top:398px;line-height:14px">ATM Strategy</div>
<div class="a c" style="left:1627px;top:397px;width:28px;height:17px;border:2px solid #E4E4E4;background:#708090;line-height:9px">...</div>
<div class="a" style="left:1504px;top:418px;width:151px;height:20px;background:linear-gradient(#F0F0F0,#E4E4E4);border:1px solid #D8D8D8;line-height:18px;padding-left:3px">&lt;None&gt;</div>
<svg class="a" style="left:1642px;top:425px" width="9" height="7" viewBox="0 0 9 7"><path d="M1 1L4.5 5L8 1" fill="none" stroke="#404040" stroke-width="1.5"/></svg>
<div class="t" style="left:1525px;top:450px;line-height:14px">A: 2039,75</div>
<div class="t" style="left:1605px;top:450px;line-height:14px">11</div>
<div class="t" style="left:1525px;top:472px;line-height:14px">B: 2039,75</div>
<div class="t" style="left:1605px;top:472px;line-height:14px">5</div>
<div class="a" style="left:1662px;top:0;width:8px;height:1187px;background:#EBEBEB;border-right:1px solid #D2D2DC"></div>
<div class="a" style="left:1670px;top:0;width:577px;height:1187px;background:#F0C869;border-left:1px solid #C9A65C"></div>
<div class="t c" style="left:1859px;top:6.5px;width:200px;font-size:15px;line-height:20px;color:#3C3C3C">Indicators</div>
<div class="a" style="left:2219px;top:7px;width:19px;height:19px;background:#C75050"></div>
<svg class="a" style="left:2225px;top:13px" width="7" height="7" viewBox="0 0 7 7"><path d="M1 1L6 6M6 1L1 6" stroke="#fff" stroke-width="1.5"/></svg>
<div class="a" style="left:1678px;top:32px;width:561px;height:1148px;background:#F0F0F0"></div>
<div class="a" style="left:1678px;top:32px;width:561px;height:2px;background:#696E73"></div>
<div class="a" style="left:1678px;top:32px;width:2px;height:1081px;background:#696E73"></div>
<div class="a" style="left:1678px;top:1113px;width:561px;height:1px;background:#FAFAFA"></div>
<div class="lb" style="left:1680px;top:34px;width:270px;height:679px">
<div class="li" style="top:2px">RIND</div>
<div class="li" style="top:15px">Rindec3B</div>
<div class="li" style="top:28px">Rindecb</div>
<div class="li" style="top:41px">Rindecz</div>
<div class="li" style="top:54px">ROC</div>
<div class="li" style="top:67px">RSI</div>
<div class="li" style="top:80px">RSquared</div>
<div class="li" style="top:93px">RSS</div>
<div class="li" style="top:106px">RVI</div>
<div class="li" style="top:119px">SMA</div>
<div class="li" style="top:132px">StdDev</div>
<div class="li" style="top:145px">StdError</div>
<div class="li" style="top:158px">Stochastics</div>
<div class="li" style="top:171px">StochasticsFast</div>
<div class="li" style="top:184px">StochRSI</div>
<div class="li" style="top:197px">SUM</div>
<div class="li" style="top:210px">Swing</div>
<div class="li" style="top:223px">T3</div>
<div class="li" style="top:236px">TEMA</div>
<div class="li" style="top:249px">TGVSASignal</div>
<div class="li" style="top:262px">TGVSAVolume</div>
<div class="li" style="top:275px">TGVSAVolumeThermometer</div>
<div class="li" style="top:288px">TheTradeScalper2</div>
<div class="li" style="top:301px">TickCounter</div>
<div class="li" style="top:314px">TMA</div>
<div class="li" style="top:327px">TRIX</div>
<div class="li" style="top:340px">TSF</div>
<div class="li" style="top:353px">TSI</div>
<div class="li" style="top:366px">TSS</div>
<div class="li" style="top:379px">UltimateOscillator</div>
<div class="li" style="top:392px">ViperProBackground</div>
<div class="li" style="top:405px">ViperProBackgroundMTF</div>
<div class="li" style="top:418px">ViperProBar</div>
<div class="li" style="top:431px">ViperProBarMTF</div>
<div class="li" style="top:444px">ViperShadowBar</div>
<div class="li" style="top:457px">VMA</div>
<div class="li" style="top:470px">VOL</div>
<div class="li" style="top:483px">VOLMA</div>
<div class="li" style="top:496px">VolumeCounter</div>
<div class="li" style="top:509px">VolumeOscillator</div>
<div class="li" style="top:522px">VolumeProfile</div>
<div class="li" style="top:535px">VolumeUpDown</div>
<div class="li" style="top:548px">VolumeZones</div>
<div class="li" style="top:561px">VROC</div>
<div class="li" style="top:574px">VSAScanner</div>
<div class="li" style="top:587px">VWMA</div>
<div class="li" style="top:600px">WilliamsR</div>
<div class="li" style="top:613px">WMA</div>
<div class="li" style="top:626px">WoodiesCCI</div>
<div class="li" style="top:639px">WoodiesPivots</div>
<div class="li" style="top:652px">ZigZag</div>
<div class="li" style="top:665px">ZLEMA</div>
<div class="a" style="left:251px;top:1px;width:16px;height:675px;background:#F0F0F0"></div>
<div class="a" style="left:251px;top:410px;width:16px;height:251px;background:#CDCDCD"></div>
<svg class="a" style="left:255px;top:6px" width="9" height="7" viewBox="0 0 9 7"><path d="M1.3 5.8L4.5 2.6L7.7 5.8" fill="none" stroke="#505050" stroke-width="2"/></svg>
<svg class="a" style="left:255px;top:666px" width="9" height="7" viewBox="0 0 9 7"><path d="M1.3 1.2L4.5 4.4L7.7 1.2" fill="none" stroke="#505050" stroke-width="2"/></svg>
</div>
<div class="lb" style="left:1680px;top:718px;width:270px;height:355px">
<div class="li" style="top:2px">ViperProBackground(ES 09-15 (1 Min))</div>
<div class="li" style="top:15px">ViperProBackgroundMTF(ES 09-15 (1 Min),1 Min)</div>
<div class="li" style="top:28px">ViperProBar(ES 09-15 (1 Min),Color [Blue],Color [Red],Color [Gold],200)</div>
<div class="li" style="top:41px">ViperProBarMTF(ES 09-15 (1 Min),1 Min,Color [Blue],Color [Red],Color [Gold],200)</div>
<div class="a" style="left:1px;top:54px;width:266px;height:13px;background:#3399FF"></div>
<div class="li" style="top:54px;color:#fff">ViperShadowBar(ES 09-15 (1 Min),2,1 Min,Color [Crimson],Color [ForestGreen],Color [White],2)</div>
</div>
<div class="pg">
<div class="row cat" style="top:0px"><div class="pm"></div><span style="position:absolute;left:17px;letter-spacing:0.12px">aMultiTimeFrame</span></div>
<div class="row" style="top:16px">
<div class="gut"></div>
<div class="pm plus"></div>
<div class="lab">01. BarType Selection</div>
<div class="val">1 Min</div>
</div>
<div class="row cat" style="top:32px"><div class="pm"></div><span style="position:absolute;left:17px;letter-spacing:0.12px">bVisualParameters</span></div>
<div class="row" style="top:48px">
<div class="gut"></div>
<div class="lab">01. Up Bar Color</div>
<div class="val"><div class="sw" style="background:#228B22"></div><span style="position:absolute;left:29px">ForestGreen</span></div>
</div>
<div class="row" style="top:64px">
<div class="gut"></div>
<div class="lab">02. Down Bar Color</div>
<div class="val"><div class="sw" style="background:#DC143C"></div><span style="position:absolute;left:29px">Crimson</span></div>
</div>
<div class="row" style="top:80px">
<div class="gut"></div>
<div class="lab">03. Bar Body Opacity</div>
<div class="val">2</div>
</div>
<div class="row" style="top:96px">
<div class="gut"></div>
<div class="lab">04. Wick Color</div>
<div class="val"><div class="sw" style="background:#FFFFFF"></div><span style="position:absolute;left:29px">White</span></div>
</div>
<div class="row" style="top:112px">
<div class="gut"></div>
<div class="lab">05. Wick Body Opacity</div>
<div class="val">2</div>
</div>
<div class="row cat" style="top:128px"><div class="pm"></div><span style="position:absolute;left:17px;letter-spacing:0.12px">Data</span></div>
<div class="row" style="top:144px">
<div class="gut"></div>
<div class="lab">Calculate on bar close</div>
<div class="val">True</div>
</div>
<div class="row" style="top:160px">
<div class="gut"></div>
<div class="lab">Input series</div>
<div class="val">ES 09-15 (1 Min)</div>
</div>
<div class="row" style="top:176px">
<div class="gut"></div>
<div class="lab">Maximum bars look back</div>
<div class="val">TwoHundredFiftySix</div>
</div>
<div class="row cat" style="top:192px"><div class="pm"></div><span style="position:absolute;left:17px;letter-spacing:0.12px">Visual</span></div>
<div class="row" style="top:208px">
<div class="gut"></div>
<div class="lab">Auto scale</div>
<div class="val">True</div>
</div>
<div class="row" style="top:224px">
<div class="gut"></div>
<div class="lab">Displacement</div>
<div class="val">0</div>
</div>
<div class="row" style="top:240px">
<div class="gut"></div>
<div class="lab">Display in Data Box</div>
<div class="val">True</div>
</div>
<div class="row" style="top:256px">
<div class="gut"></div>
<div class="lab" style="background:#C8C8C8">Label</div>
<div class="val">ViperShadowBar</div>
</div>
<div class="row" style="top:272px">
<div class="gut"></div>
<div class="lab">Panel</div>
<div class="val">Same as input series</div>
</div>
<div class="row" style="top:288px">
<div class="gut"></div>
<div class="lab">Price marker(s)</div>
<div class="val">True</div>
</div>
<div class="row" style="top:304px">
<div class="gut"></div>
<div class="lab">Scale justification</div>
<div class="val">Right</div>
</div>
<div class="row cat" style="top:320px"><div class="pm"></div><span style="position:absolute;left:17px;letter-spacing:0.12px">Plots</span></div>
<div class="row" style="top:336px">
<div class="gut"></div>
<div class="pm plus"></div>
<div class="lab">Plot0</div>
<div class="val"><div class="sw" style="background:#fff"></div><svg class="a" style="left:3px;top:3px" width="18" height="9" viewBox="0 0 18 9"><polyline points="1,8 5,2 9,5 13,1 17,1" fill="none" stroke="#FFA500" stroke-width="1.6"/></svg><span style="position:absolute;left:29px">Line; Solid; 1px</span></div>
</div>
<div class="a" style="left:14px;top:352px;width:263px;height:1px;background:#CCCCCC"></div>
</div>
<div class="a" style="left:1958px;top:1054px;width:279px;height:59px;border:1px solid #9A9A9A;background:#F0F0F0"></div>
<div class="t" style="left:1963px;top:1057px;font-weight:bold;line-height:14px">Label</div>
<div class="btn" style="left:1705px;top:1083px;width:66px;color:#9A9A9A;border-color:#D4D4D4;background:#EFEFEF">New</div>
<div class="btn" style="left:1857px;top:1083px;width:66px">Remove</div>
<div class="btn" style="left:1767px;top:1144px;width:79px">OK</div>
<div class="btn" style="left:1919px;top:1144px;width:78px;border-color:#3399FF">Apply</div>
<div class="btn" style="left:2072px;top:1144px;width:78px">Close</div>
<div class="a" style="left:2234px;top:1168px;width:2px;height:2px;background:#B4B4B4"></div>
<div class="a" style="left:2230px;top:1172px;width:2px;height:2px;background:#B4B4B4"></div>
<div class="a" style="left:2234px;top:1172px;width:2px;height:2px;background:#B4B4B4"></div>
<div class="a" style="left:2226px;top:1176px;width:2px;height:2px;background:#B4B4B4"></div>
<div class="a" style="left:2230px;top:1176px;width:2px;height:2px;background:#B4B4B4"></div>
<div class="a" style="left:2234px;top:1176px;width:2px;height:2px;background:#B4B4B4"></div>
<div class="wm" id="wm1" style="left:1744px;top:894px;font-size:19px;line-height:22px;letter-spacing:1.03px;transform:rotate(-12.1deg)">www.trading-software-collection.com</div>
<div class="wm" id="wm2" style="left:1728px;top:927px;font-size:19px;line-height:22px;letter-spacing:0.5px;transform:rotate(-12.5deg)">andreybbrv@gmail.com, Skype: andreybbrv</div>
</body></html>
